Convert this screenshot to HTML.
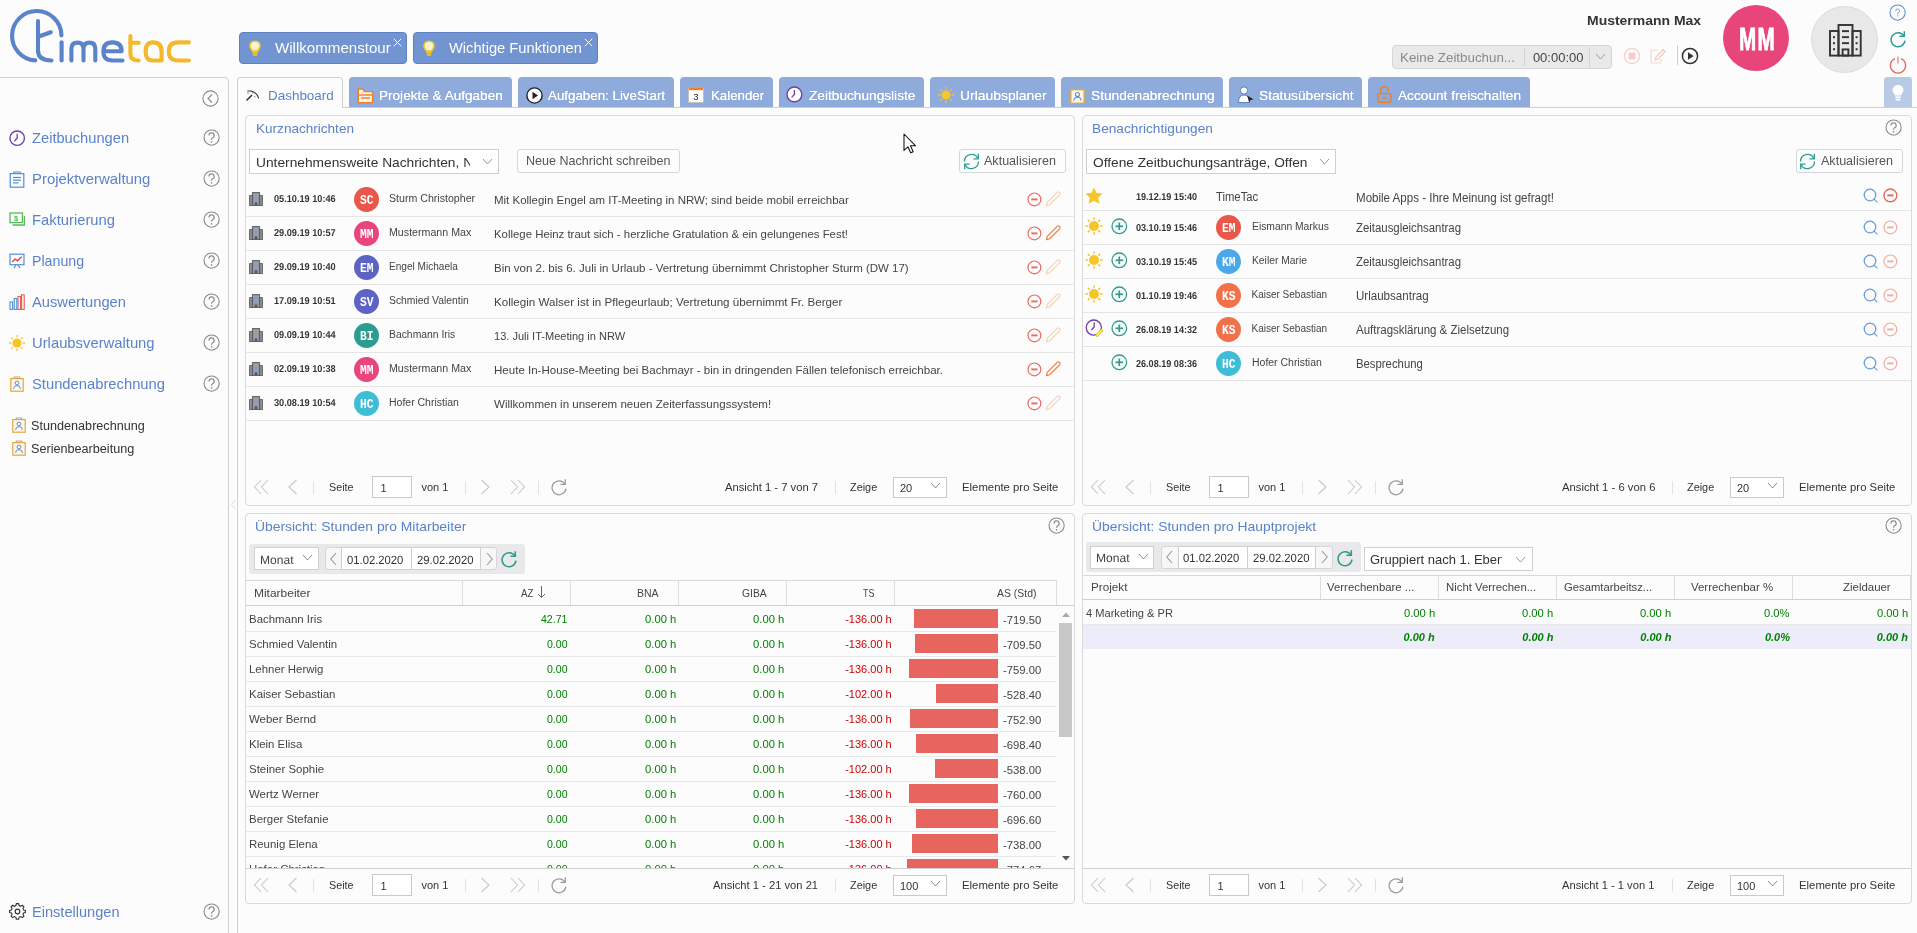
<!DOCTYPE html><html><head><meta charset="utf-8"><title>TimeTac Dashboard</title><style>
html,body{margin:0;padding:0;}
body{width:1917px;height:933px;overflow:hidden;position:relative;background:#fcfcfc;font-family:"Liberation Sans",sans-serif;}
.a{position:absolute;display:block;}
.t{position:absolute;white-space:nowrap;line-height:1;transform-origin:0 0;}
</style></head><body><div class="a" style="left:0;top:0;width:1917px;height:933px;overflow:hidden;will-change:transform;background:#fcfcfc">
<svg class="a" style="left:0;top:0" width="200" height="76" viewBox="0 0 200 76">
<g fill="none" stroke="#5a83ca" stroke-width="4.1" stroke-linecap="round" stroke-linejoin="round">
<path d="M35.2 60.4 A24.7 24.7 0 1 1 61.45 35.4"/>
<path d="M38 21 L38 50.5 Q38 60.5 51.5 60.5"/>
<path d="M38 36.8 L50.8 32.3"/>
<path d="M61.6 42.2 L61.6 60.4"/>
<path d="M71.4 60.4 L71.4 49 Q71.4 42.6 77.4 42.6 Q83.5 42.6 83.5 49 L83.5 60.4 M83.5 49 Q83.5 42.6 89.5 42.6 Q95.3 42.6 95.3 49 L95.3 60.4"/>
<path d="M122.5 60.5 L112.5 60.5 Q103.4 60.5 103.4 51.5 Q103.4 42.4 112.4 42.4 Q121.6 42.4 121.6 51.2 L104 51.2"/>
</g>
<g fill="none" stroke="#f4b82e" stroke-width="4.1" stroke-linecap="round" stroke-linejoin="round">
<path d="M130.4 36 L130.4 54 Q130.4 60.5 138.6 60.5"/>
<path d="M130.4 42.8 L138.8 42.8"/>
<path d="M161.6 60.4 L161.6 51.5 Q161.6 42.4 152.6 42.4 Q145.6 42.4 145.6 51.5 Q145.6 60.5 152.6 60.5 L161.6 60.5"/>
<path d="M188.8 42.4 L178.2 42.4 Q168.8 42.4 168.8 51.5 Q168.8 60.5 178.2 60.5 L188.8 60.5"/>
</g></svg>
<div class="a" style="left:239px;top:32px;width:168px;height:32px;background:#7295d1;border:1px solid #5d80c5;box-sizing:border-box;border-radius:4px;"></div>
<svg class="a" style="left:249px;top:40px;" width="12" height="17" viewBox="0 0 12 17"><path d="M6 1.2 C2.8 1.2 1 3.5 1 6 C1 8.2 2.6 9.2 3.4 11 L8.6 11 C9.4 9.2 11 8.2 11 6 C11 3.5 9.2 1.2 6 1.2 Z" fill="#fbf2d2" stroke="#f4c92a" stroke-width="1.6"/><rect x="3.4" y="11.8" width="5.2" height="1.8" fill="#f4c92a"/><rect x="3.8" y="14.1" width="4.4" height="1.6" fill="#f4c92a"/></svg>
<div class="t" style="left:275.00px;top:41.00px;font-size:14px;color:#fff;transform:scaleX(1.0782);">Willkommenstour</div>
<svg class="a" style="left:393px;top:37.5px;" width="9" height="9" viewBox="0 0 9 9"><path d="M0.8 0.8 L8.2 8.2 M8.2 0.8 L0.8 8.2" stroke="#fff" stroke-width="1"/></svg>
<div class="a" style="left:413px;top:32px;width:185px;height:32px;background:#7295d1;border:1px solid #5d80c5;box-sizing:border-box;border-radius:4px;"></div>
<svg class="a" style="left:423px;top:40px;" width="12" height="17" viewBox="0 0 12 17"><path d="M6 1.2 C2.8 1.2 1 3.5 1 6 C1 8.2 2.6 9.2 3.4 11 L8.6 11 C9.4 9.2 11 8.2 11 6 C11 3.5 9.2 1.2 6 1.2 Z" fill="#fbf2d2" stroke="#f4c92a" stroke-width="1.6"/><rect x="3.4" y="11.8" width="5.2" height="1.8" fill="#f4c92a"/><rect x="3.8" y="14.1" width="4.4" height="1.6" fill="#f4c92a"/></svg>
<div class="t" style="left:448.70px;top:41.00px;font-size:14px;color:#fff;transform:scaleX(1.0481);">Wichtige Funktionen</div>
<svg class="a" style="left:584px;top:37.5px;" width="9" height="9" viewBox="0 0 9 9"><path d="M0.8 0.8 L8.2 8.2 M8.2 0.8 L0.8 8.2" stroke="#fff" stroke-width="1"/></svg>
<div class="t" style="left:1586.60px;top:14.00px;font-size:13px;color:#333;font-weight:bold;transform:scaleX(1.0744);">Mustermann Max</div>
<div class="a" style="left:1392px;top:45px;width:220px;height:24px;background:#e9e9e9;border:1px solid #d6d6d6;box-sizing:border-box;border-radius:4px;"></div>
<div class="a" style="left:1523.5px;top:48px;width:1px;height:18px;background:#d4d4d4;"></div>
<div class="a" style="left:1589px;top:47px;width:1px;height:21px;background:#d4d4d4;"></div>
<div class="t" style="left:1399.50px;top:51.00px;font-size:13px;color:#8a8a8a;transform:scaleX(1.0264);">Keine Zeitbuchun...</div>
<div class="t" style="left:1532.90px;top:51.00px;font-size:13px;color:#444;">00:00:00</div>
<svg class="a" style="left:1595.3px;top:53.3px;" width="11" height="7" viewBox="0 0 11 7"><path d="M1 1 L5.5 6 L10 1" fill="none" stroke="#999" stroke-width="1"/></svg>
<svg class="a" style="left:1623px;top:47px;" width="18" height="18" viewBox="0 0 18 18"><circle cx="9" cy="9" r="7.6" fill="none" stroke="#f6cdc8" stroke-width="1.3"/><rect x="5.6" y="5.6" width="6.8" height="6.8" rx="1" fill="#f6cdc8"/></svg>
<svg class="a" style="left:1649px;top:47px;" width="18" height="18" viewBox="0 0 18 18"><path d="M2 3 L9 3 M2 3 L2 16 L12 16 L12 12" fill="none" stroke="#f3d9cf" stroke-width="1.2"/><path d="M6 13 L7 10 L14 2.5 L16 4.5 L9 12 Z" fill="none" stroke="#f5cdb8" stroke-width="1.3"/></svg>
<div class="a" style="left:1676.5px;top:45px;width:1px;height:20px;background:#cfcfcf;"></div>
<svg class="a" style="left:1681px;top:47px;" width="18" height="18" viewBox="0 0 18 18"><circle cx="9" cy="9" r="7.6" fill="none" stroke="#333" stroke-width="1.5"/><path d="M7 5.2 L12.6 9 L7 12.8 Z" fill="#333"/></svg>
<div class="a" style="left:1723px;top:5px;width:66px;height:66px;border-radius:50%;background:#e8457a;"></div>
<div class="t" style="left:1739.3px;top:24px;font-size:31.5px;color:#fff;font-weight:bold;transform:scaleX(0.655);letter-spacing:2px;-webkit-text-stroke:0.9px #fff">MM</div>
<div class="a" style="left:1811px;top:6px;width:67px;height:67px;border-radius:50%;background:#e8e8e8;border:1px solid #dcdcdc;box-sizing:border-box;"></div>
<svg class="a" style="left:1829px;top:23.5px;" width="33" height="33" viewBox="0 0 33 33"><g fill="none" stroke="#333" stroke-width="1.9"><rect x="9.5" y="1" width="14" height="30.6"/><rect x="1" y="7" width="8.5" height="24.6"/><rect x="23.5" y="7" width="8.2" height="24.6"/><rect x="13.6" y="25.4" width="5.8" height="6.2"/></g><g fill="#333"><rect x="13" y="6.2" width="7" height="1.9"/><rect x="13" y="12.2" width="7" height="1.9"/><rect x="13" y="18.2" width="7" height="1.9"/><rect x="4" y="12.2" width="2" height="2"/><rect x="4" y="18.2" width="2" height="2"/><rect x="4" y="24.2" width="2" height="2"/><rect x="26.6" y="12.2" width="2" height="2"/><rect x="26.6" y="18.2" width="2" height="2"/><rect x="26.6" y="24.2" width="2" height="2"/></g></svg>
<svg class="a" style="left:1888.4px;top:3.4000000000000004px;" width="19.2" height="19.2" viewBox="0 0 19.2 19.2"><circle cx="9.6" cy="9.6" r="7.6" fill="none" stroke="#5b8fd6" stroke-width="1.1"/><g transform="translate(9.6 9.6) scale(0.75)"><path d="M-2.6 -2.2 a2.6 2.6 0 1 1 3.6 2.4 c-0.8 0.4 -1 0.9 -1 1.9" fill="none" stroke="#5b8fd6" stroke-width="1.2000000000000002"/><circle cx="0" cy="4.3" r="0.8" fill="#5b8fd6"/></g></svg>
<svg class="a" style="left:1889.0px;top:29.6px;" width="18" height="18" viewBox="0 0 16 16"><path d="M13.2 5.2 A6.2 6.2 0 1 0 14.2 9.5" fill="none" stroke="#2a9d8f" stroke-width="1.3"/><path d="M13.6 1.2 L13.6 5.6 L9.3 5.6" fill="none" stroke="#2a9d8f" stroke-width="1.3"/></svg>
<svg class="a" style="left:1889px;top:56px;" width="18" height="18" viewBox="0 0 18 18"><path d="M5.9 2.6 A7.6 7.6 0 1 0 12.1 2.6" fill="none" stroke="#e8675a" stroke-width="1.3"/><line x1="9" y1="0.8" x2="9" y2="7.6" stroke="#ec8a80" stroke-width="1.4"/></svg>
<div class="a" style="left:-5px;top:77px;width:234px;height:900px;border:1px solid #cfcfcf;border-radius:4px;box-sizing:border-box;background:#fcfcfc"></div>
<svg class="a" style="left:201.5px;top:89.5px;" width="17" height="17" viewBox="0 0 17 17"><circle cx="8.5" cy="8.5" r="7.6" fill="none" stroke="#8a8a8a" stroke-width="1.1"/><path d="M10 4.5 L6 8.5 L10 12.5" fill="none" stroke="#8a8a8a" stroke-width="1.1"/></svg>
<div class="t" style="left:31.50px;top:130.00px;font-size:15px;color:#5b82c9;transform:scaleX(0.9783);">Zeitbuchungen</div>
<svg class="a" style="left:201.9px;top:128.4px;" width="19.2" height="19.2" viewBox="0 0 19.2 19.2"><circle cx="9.6" cy="9.6" r="7.6" fill="none" stroke="#8a8a8a" stroke-width="1.1"/><g transform="translate(9.6 9.6) scale(1.0)"><path d="M-2.6 -2.2 a2.6 2.6 0 1 1 3.6 2.4 c-0.8 0.4 -1 0.9 -1 1.9" fill="none" stroke="#8a8a8a" stroke-width="1.2000000000000002"/><circle cx="0" cy="4.3" r="0.8" fill="#8a8a8a"/></g></svg>
<div class="t" style="left:31.50px;top:171.00px;font-size:15px;color:#5b82c9;transform:scaleX(0.9930);">Projektverwaltung</div>
<svg class="a" style="left:201.9px;top:169.4px;" width="19.2" height="19.2" viewBox="0 0 19.2 19.2"><circle cx="9.6" cy="9.6" r="7.6" fill="none" stroke="#8a8a8a" stroke-width="1.1"/><g transform="translate(9.6 9.6) scale(1.0)"><path d="M-2.6 -2.2 a2.6 2.6 0 1 1 3.6 2.4 c-0.8 0.4 -1 0.9 -1 1.9" fill="none" stroke="#8a8a8a" stroke-width="1.2000000000000002"/><circle cx="0" cy="4.3" r="0.8" fill="#8a8a8a"/></g></svg>
<div class="t" style="left:31.50px;top:212.00px;font-size:15px;color:#5b82c9;transform:scaleX(0.9855);">Fakturierung</div>
<svg class="a" style="left:201.9px;top:210.4px;" width="19.2" height="19.2" viewBox="0 0 19.2 19.2"><circle cx="9.6" cy="9.6" r="7.6" fill="none" stroke="#8a8a8a" stroke-width="1.1"/><g transform="translate(9.6 9.6) scale(1.0)"><path d="M-2.6 -2.2 a2.6 2.6 0 1 1 3.6 2.4 c-0.8 0.4 -1 0.9 -1 1.9" fill="none" stroke="#8a8a8a" stroke-width="1.2000000000000002"/><circle cx="0" cy="4.3" r="0.8" fill="#8a8a8a"/></g></svg>
<div class="t" style="left:31.50px;top:253.00px;font-size:15px;color:#5b82c9;transform:scaleX(0.9465);">Planung</div>
<svg class="a" style="left:201.9px;top:251.4px;" width="19.2" height="19.2" viewBox="0 0 19.2 19.2"><circle cx="9.6" cy="9.6" r="7.6" fill="none" stroke="#8a8a8a" stroke-width="1.1"/><g transform="translate(9.6 9.6) scale(1.0)"><path d="M-2.6 -2.2 a2.6 2.6 0 1 1 3.6 2.4 c-0.8 0.4 -1 0.9 -1 1.9" fill="none" stroke="#8a8a8a" stroke-width="1.2000000000000002"/><circle cx="0" cy="4.3" r="0.8" fill="#8a8a8a"/></g></svg>
<div class="t" style="left:31.50px;top:294.00px;font-size:15px;color:#5b82c9;transform:scaleX(0.9791);">Auswertungen</div>
<svg class="a" style="left:201.9px;top:292.4px;" width="19.2" height="19.2" viewBox="0 0 19.2 19.2"><circle cx="9.6" cy="9.6" r="7.6" fill="none" stroke="#8a8a8a" stroke-width="1.1"/><g transform="translate(9.6 9.6) scale(1.0)"><path d="M-2.6 -2.2 a2.6 2.6 0 1 1 3.6 2.4 c-0.8 0.4 -1 0.9 -1 1.9" fill="none" stroke="#8a8a8a" stroke-width="1.2000000000000002"/><circle cx="0" cy="4.3" r="0.8" fill="#8a8a8a"/></g></svg>
<div class="t" style="left:31.50px;top:335.00px;font-size:15px;color:#5b82c9;transform:scaleX(0.9868);">Urlaubsverwaltung</div>
<svg class="a" style="left:201.9px;top:333.4px;" width="19.2" height="19.2" viewBox="0 0 19.2 19.2"><circle cx="9.6" cy="9.6" r="7.6" fill="none" stroke="#8a8a8a" stroke-width="1.1"/><g transform="translate(9.6 9.6) scale(1.0)"><path d="M-2.6 -2.2 a2.6 2.6 0 1 1 3.6 2.4 c-0.8 0.4 -1 0.9 -1 1.9" fill="none" stroke="#8a8a8a" stroke-width="1.2000000000000002"/><circle cx="0" cy="4.3" r="0.8" fill="#8a8a8a"/></g></svg>
<div class="t" style="left:31.50px;top:376.00px;font-size:15px;color:#5b82c9;transform:scaleX(0.9842);">Stundenabrechnung</div>
<svg class="a" style="left:201.9px;top:374.4px;" width="19.2" height="19.2" viewBox="0 0 19.2 19.2"><circle cx="9.6" cy="9.6" r="7.6" fill="none" stroke="#8a8a8a" stroke-width="1.1"/><g transform="translate(9.6 9.6) scale(1.0)"><path d="M-2.6 -2.2 a2.6 2.6 0 1 1 3.6 2.4 c-0.8 0.4 -1 0.9 -1 1.9" fill="none" stroke="#8a8a8a" stroke-width="1.2000000000000002"/><circle cx="0" cy="4.3" r="0.8" fill="#8a8a8a"/></g></svg>
<svg class="a" style="left:7.5px;top:128.8px;" width="18.4" height="18.4" viewBox="0 0 18.4 18.4"><circle cx="9.2" cy="9.2" r="7.2" fill="#fff" stroke="#6f3fa8" stroke-width="1.4"/><path d="M9.2 4.699999999999999 L9.2 9.2 L6.3999999999999995 12.2" fill="none" stroke="#6f3fa8" stroke-width="1.3"/></svg>
<svg class="a" style="left:9px;top:171px;" width="16" height="17" viewBox="0 0 16 17"><g fill="none" stroke="#4f8fd6" stroke-width="1.2"><rect x="1.2" y="2.6" width="13.6" height="13.6"/><path d="M5 2.6 L5 1 L11 1 L11 2.6"/><line x1="4" y1="6.5" x2="12" y2="6.5"/><line x1="4" y1="9.2" x2="12" y2="9.2"/><line x1="4" y1="11.9" x2="9.5" y2="11.9"/></g></svg>
<svg class="a" style="left:8.5px;top:212px;" width="17" height="16" viewBox="0 0 17 16"><g fill="none" stroke="#57b95a" stroke-width="1.3"><rect x="1" y="1" width="12.4" height="9.6"/><path d="M3.6 13 L15.4 13 L15.4 4"/></g><text x="7.2" y="8.6" font-size="7.5" font-family="Liberation Sans" fill="#57b95a" text-anchor="middle" font-weight="bold">$</text></svg>
<svg class="a" style="left:9px;top:253px;" width="16" height="16" viewBox="0 0 16 16"><g fill="none" stroke="#4f8fd6" stroke-width="1.2"><rect x="1" y="1.2" width="14" height="10.5"/><path d="M5 15 L7 11.7 M11 15 L9 11.7"/></g><path d="M3.2 9 L6 6 L8.5 7.8 L12.8 3.6" fill="none" stroke="#e53935" stroke-width="1.3"/></svg>
<svg class="a" style="left:9px;top:294px;" width="16" height="16" viewBox="0 0 16 16"><g fill="none" stroke-width="1.1"><rect x="1" y="8" width="2.6" height="7.4" stroke="#4f8fd6"/><rect x="5.2" y="4.5" width="2.6" height="10.9" stroke="#4f8fd6"/><rect x="9" y="2.5" width="2.6" height="12.9" stroke="#e35b5b"/><rect x="12.6" y="0.8" width="2.6" height="14.6" stroke="#e35b5b"/></g></svg>
<svg class="a" style="left:7.699999999999999px;top:334.0px;" width="18" height="18" viewBox="0 0 18 18"><circle cx="9.0" cy="9.0" r="4.6" fill="#f5c52a"/><line x1="15.20" y1="9.00" x2="16.60" y2="9.00" stroke="#f5c52a" stroke-width="1.3" stroke-linecap="round"/><line x1="13.38" y1="13.38" x2="14.37" y2="14.37" stroke="#f5c52a" stroke-width="1.3" stroke-linecap="round"/><line x1="9.00" y1="15.20" x2="9.00" y2="16.60" stroke="#f5c52a" stroke-width="1.3" stroke-linecap="round"/><line x1="4.62" y1="13.38" x2="3.63" y2="14.37" stroke="#f5c52a" stroke-width="1.3" stroke-linecap="round"/><line x1="2.80" y1="9.00" x2="1.40" y2="9.00" stroke="#f5c52a" stroke-width="1.3" stroke-linecap="round"/><line x1="4.62" y1="4.62" x2="3.63" y2="3.63" stroke="#f5c52a" stroke-width="1.3" stroke-linecap="round"/><line x1="9.00" y1="2.80" x2="9.00" y2="1.40" stroke="#f5c52a" stroke-width="1.3" stroke-linecap="round"/><line x1="13.38" y1="4.62" x2="14.37" y2="3.63" stroke="#f5c52a" stroke-width="1.3" stroke-linecap="round"/></svg>
<svg class="a" style="left:9.8px;top:376px;" width="14" height="16" viewBox="0 0 14 16"><rect x="0.8" y="2.6" width="12.4" height="12.6" fill="#fff8e8" stroke="#e2a93a" stroke-width="1.2"/><path d="M4.2 2.6 L4.2 1 L9.8 1 L9.8 2.6" fill="none" stroke="#aaa" stroke-width="1.1"/><circle cx="7" cy="7" r="1.9" fill="none" stroke="#5b8fd6" stroke-width="1"/><path d="M3.6 13 Q3.6 9.6 7 9.6 Q10.4 9.6 10.4 13" fill="none" stroke="#5b8fd6" stroke-width="1"/></svg>
<svg class="a" style="left:11.7px;top:417.4px;" width="14" height="16" viewBox="0 0 14 16"><rect x="0.8" y="2.6" width="12.4" height="12.6" fill="#fff8e8" stroke="#e2a93a" stroke-width="1.2"/><path d="M4.2 2.6 L4.2 1 L9.8 1 L9.8 2.6" fill="none" stroke="#aaa" stroke-width="1.1"/><circle cx="7" cy="7" r="1.9" fill="none" stroke="#5b8fd6" stroke-width="1"/><path d="M3.6 13 Q3.6 9.6 7 9.6 Q10.4 9.6 10.4 13" fill="none" stroke="#5b8fd6" stroke-width="1"/></svg>
<div class="t" style="left:31.20px;top:420.00px;font-size:12px;color:#333;transform:scaleX(1.0531);">Stundenabrechnung</div>
<svg class="a" style="left:11.7px;top:440.4px;" width="14" height="16" viewBox="0 0 14 16"><rect x="0.8" y="2.6" width="12.4" height="12.6" fill="#fff8e8" stroke="#e2a93a" stroke-width="1.2"/><path d="M4.2 2.6 L4.2 1 L9.8 1 L9.8 2.6" fill="none" stroke="#aaa" stroke-width="1.1"/><circle cx="7" cy="7" r="1.9" fill="none" stroke="#5b8fd6" stroke-width="1"/><path d="M3.6 13 Q3.6 9.6 7 9.6 Q10.4 9.6 10.4 13" fill="none" stroke="#5b8fd6" stroke-width="1"/></svg>
<div class="t" style="left:31.20px;top:443.00px;font-size:12px;color:#333;transform:scaleX(1.0524);">Serienbearbeitung</div>
<svg class="a" style="left:9px;top:903px;" width="17" height="17" viewBox="0 0 17 17"><g fill="none" stroke="#333" stroke-width="1.2"><circle cx="8.5" cy="8.5" r="2.3"/><path d="M7.3 1.2 L9.7 1.2 L10.2 3.2 L11.8 4 L13.6 3 L15.3 4.7 L14.3 6.5 L15 8 L16.9 8.5 L16.9 10.8 L15 11.2 L14.3 12.6 L15.3 14.4 L13.6 16 L11.8 15 L10.2 15.8 L9.7 17.8 L7.3 17.8 L6.8 15.8 L5.2 15 L3.4 16 L1.7 14.4 L2.7 12.6 L2 11.2 L0.1 10.8 L0.1 8.5 L2 8 L2.7 6.5 L1.7 4.7 L3.4 3 L5.2 4 L6.8 3.2 Z" transform="translate(0.5 -0.5) scale(0.94)"/></g></svg>
<div class="t" style="left:31.50px;top:904.00px;font-size:15px;color:#5b82c9;transform:scaleX(0.9715);">Einstellungen</div>
<svg class="a" style="left:201.9px;top:901.9px;" width="19.2" height="19.2" viewBox="0 0 19.2 19.2"><circle cx="9.6" cy="9.6" r="7.6" fill="none" stroke="#8a8a8a" stroke-width="1.1"/><g transform="translate(9.6 9.6) scale(1.0)"><path d="M-2.6 -2.2 a2.6 2.6 0 1 1 3.6 2.4 c-0.8 0.4 -1 0.9 -1 1.9" fill="none" stroke="#8a8a8a" stroke-width="1.2000000000000002"/><circle cx="0" cy="4.3" r="0.8" fill="#8a8a8a"/></g></svg>
<svg class="a" style="left:230px;top:499px;" width="7" height="11" viewBox="0 0 7 11"><path d="M5 1 L1.5 5.5 L5 10" fill="none" stroke="#dcdcdc" stroke-width="1"/></svg>
<div class="a" style="left:237px;top:107px;width:1700px;height:900px;border-top:1px solid #cfcfcf;border-left:1px solid #cfcfcf;background:#fcfcfc"></div>
<div class="a" style="left:237px;top:77px;width:106px;height:31px;border:1px solid #cfcfcf;border-bottom:none;border-radius:4px 4px 0 0;box-sizing:border-box;background:#fcfcfc"></div>
<svg class="a" style="left:244.5px;top:87px;" width="15" height="14" viewBox="0 0 15 14"><path d="M2 13 L6.5 8.5" stroke="#333" stroke-width="1.6" stroke-linecap="round"/><path d="M2.4 4.2 A9.5 9.5 0 0 1 13.6 11.4" fill="none" stroke="#333" stroke-width="1.1" stroke-dasharray="0.1 0"/><circle cx="3" cy="6" r="0.6" fill="#333"/><circle cx="7.8" cy="5.8" r="0.6" fill="#555"/><circle cx="9.8" cy="9.8" r="0.6" fill="#555"/></svg>
<div class="t" style="left:267.80px;top:89.00px;font-size:13px;color:#5b82c9;transform:scaleX(1.0342);">Dashboard</div>
<div class="a" style="left:349px;top:77px;width:163px;height:30px;background:#8eabdb;border-radius:4px 4px 0 0;"></div>
<div class="t" style="left:379.40px;top:89.00px;font-size:13px;color:#fff;transform:scaleX(1.0442);text-shadow:0 0 0.4px #fff;">Projekte &amp; Aufgaben</div>
<svg class="a" style="left:356.5px;top:86.5px;" width="17" height="17" viewBox="0 0 17 17"><g fill="none" stroke="#f07f24" stroke-width="1.4"><path d="M1.3 3 L1.3 15.6 L15.6 15.6 L15.6 4.6 L7.4 4.6 L6 2 L1.3 2 Z" fill="#fff3e6"/><line x1="1.3" y1="8" x2="15.6" y2="8"/><line x1="4" y1="11" x2="13" y2="11"/></g></svg>
<div class="a" style="left:518px;top:77px;width:156px;height:30px;background:#8eabdb;border-radius:4px 4px 0 0;"></div>
<div class="t" style="left:548.40px;top:89.00px;font-size:13px;color:#fff;transform:scaleX(1.0252);text-shadow:0 0 0.4px #fff;">Aufgaben: LiveStart</div>
<svg class="a" style="left:525.5px;top:86.5px;" width="17" height="17" viewBox="0 0 17 17"><circle cx="8.5" cy="8.5" r="7.6" fill="#fff" stroke="#222" stroke-width="1.4"/><path d="M6.5 4.8 L12 8.5 L6.5 12.2 Z" fill="#222"/></svg>
<div class="a" style="left:680px;top:77px;width:93px;height:30px;background:#8eabdb;border-radius:4px 4px 0 0;"></div>
<div class="t" style="left:710.70px;top:89.00px;font-size:13px;color:#fff;transform:scaleX(1.0218);text-shadow:0 0 0.4px #fff;">Kalender</div>
<svg class="a" style="left:688px;top:87px;" width="16" height="16" viewBox="0 0 16 16"><rect x="0.5" y="1.2" width="15" height="14.3" fill="#fff" stroke="#bbb" stroke-width="0.8"/><rect x="1" y="1" width="14" height="2.2" fill="#f57f17"/><text x="8" y="12.6" font-size="9.5" font-family="Liberation Sans" fill="#222" text-anchor="middle">3</text></svg>
<div class="a" style="left:779px;top:77px;width:145px;height:30px;background:#8eabdb;border-radius:4px 4px 0 0;"></div>
<div class="t" style="left:808.80px;top:89.00px;font-size:13px;color:#fff;transform:scaleX(1.0514);text-shadow:0 0 0.4px #fff;">Zeitbuchungsliste</div>
<svg class="a" style="left:785.2px;top:85.39999999999999px;" width="18.8" height="18.8" viewBox="0 0 18.8 18.8"><circle cx="9.4" cy="9.4" r="7.4" fill="#fff" stroke="#6f3fa8" stroke-width="1.4"/><path d="M9.4 4.9 L9.4 9.4 L6.6000000000000005 12.4" fill="none" stroke="#6f3fa8" stroke-width="1.3"/></svg>
<div class="a" style="left:930px;top:77px;width:125px;height:30px;background:#8eabdb;border-radius:4px 4px 0 0;"></div>
<div class="t" style="left:960.00px;top:89.00px;font-size:13px;color:#fff;transform:scaleX(1.0695);text-shadow:0 0 0.4px #fff;">Urlaubsplaner</div>
<svg class="a" style="left:937.0px;top:85.8px;" width="18" height="18" viewBox="0 0 18 18"><circle cx="9.0" cy="9.0" r="4.6" fill="#f5c52a"/><line x1="15.20" y1="9.00" x2="16.60" y2="9.00" stroke="#f5c52a" stroke-width="1.3" stroke-linecap="round"/><line x1="13.38" y1="13.38" x2="14.37" y2="14.37" stroke="#f5c52a" stroke-width="1.3" stroke-linecap="round"/><line x1="9.00" y1="15.20" x2="9.00" y2="16.60" stroke="#f5c52a" stroke-width="1.3" stroke-linecap="round"/><line x1="4.62" y1="13.38" x2="3.63" y2="14.37" stroke="#f5c52a" stroke-width="1.3" stroke-linecap="round"/><line x1="2.80" y1="9.00" x2="1.40" y2="9.00" stroke="#f5c52a" stroke-width="1.3" stroke-linecap="round"/><line x1="4.62" y1="4.62" x2="3.63" y2="3.63" stroke="#f5c52a" stroke-width="1.3" stroke-linecap="round"/><line x1="9.00" y1="2.80" x2="9.00" y2="1.40" stroke="#f5c52a" stroke-width="1.3" stroke-linecap="round"/><line x1="13.38" y1="4.62" x2="14.37" y2="3.63" stroke="#f5c52a" stroke-width="1.3" stroke-linecap="round"/></svg>
<div class="a" style="left:1061px;top:77px;width:162px;height:30px;background:#8eabdb;border-radius:4px 4px 0 0;"></div>
<div class="t" style="left:1091.00px;top:89.00px;font-size:13px;color:#fff;transform:scaleX(1.0567);text-shadow:0 0 0.4px #fff;">Stundenabrechnung</div>
<svg class="a" style="left:1069.8px;top:86.5px;" width="15" height="17" viewBox="0 0 14 16"><rect x="0.8" y="2.6" width="12.4" height="12.6" fill="#fff8e8" stroke="#e2a93a" stroke-width="1.2"/><path d="M4.2 2.6 L4.2 1 L9.8 1 L9.8 2.6" fill="none" stroke="#aaa" stroke-width="1.1"/><circle cx="7" cy="7" r="1.9" fill="none" stroke="#5b8fd6" stroke-width="1"/><path d="M3.6 13 Q3.6 9.6 7 9.6 Q10.4 9.6 10.4 13" fill="none" stroke="#5b8fd6" stroke-width="1"/></svg>
<div class="a" style="left:1229px;top:77px;width:133px;height:30px;background:#8eabdb;border-radius:4px 4px 0 0;"></div>
<div class="t" style="left:1258.70px;top:89.00px;font-size:13px;color:#fff;transform:scaleX(1.0555);text-shadow:0 0 0.4px #fff;">Statusübersicht</div>
<svg class="a" style="left:1238px;top:86px;" width="16" height="17" viewBox="0 0 16 17"><circle cx="6" cy="4.5" r="3.6" fill="#fff" stroke="#3d6fb5" stroke-width="0.8"/><path d="M0.5 16.5 Q0.5 9 6 9 Q11.5 9 11.5 16.5 Z" fill="#fff" stroke="#3d6fb5" stroke-width="0.8"/><path d="M9.2 9.6 L15.6 13.4 L12.4 13.9 L11.2 16.6 Z" fill="#222"/></svg>
<div class="a" style="left:1368px;top:77px;width:162px;height:30px;background:#8eabdb;border-radius:4px 4px 0 0;"></div>
<div class="t" style="left:1398.20px;top:89.00px;font-size:13px;color:#fff;transform:scaleX(1.0513);text-shadow:0 0 0.4px #fff;">Account freischalten</div>
<svg class="a" style="left:1376.5px;top:86px;" width="15" height="17" viewBox="0 0 15 17"><g fill="none" stroke="#f07f24" stroke-width="1.4"><rect x="1" y="7.6" width="13" height="8.6" rx="1.5"/><path d="M3.6 7.6 L3.6 4.6 A3.9 3.9 0 0 1 11.4 4.6 L11.4 5"/><line x1="5.5" y1="12" x2="9.5" y2="12"/></g></svg>
<div class="a" style="left:1884px;top:77px;width:28px;height:30px;background:#b9cae7;border-radius:3px 3px 0 0;"></div>
<svg class="a" style="left:1891px;top:84px;" width="14" height="18" viewBox="0 0 14 18"><path d="M7 1 C3.6 1 1.6 3.4 1.6 6.2 C1.6 8.6 3.4 9.8 4 11.5 L10 11.5 C10.6 9.8 12.4 8.6 12.4 6.2 C12.4 3.4 10.4 1 7 1 Z" fill="#fff"/><rect x="4.3" y="12.4" width="5.4" height="1.8" fill="#fff"/><rect x="4.8" y="14.8" width="4.4" height="1.7" fill="#fff"/></svg>
<div class="a" style="left:245px;top:115px;width:830px;height:391px;border:1px solid #dadada;border-radius:4px;box-sizing:border-box;background:#fcfcfc;"></div>
<div class="t" style="left:255.70px;top:122.00px;font-size:13px;color:#5b82c9;transform:scaleX(1.0429);">Kurznachrichten</div>
<div class="a" style="left:249px;top:149px;width:250px;height:25px;border:1px solid #cfcfcf;background:#fff;box-sizing:border-box;"></div>
<div class="a" style="left:250px;top:150px;width:220px;height:23px;overflow:hidden">
<div class="t" style="left:6.40px;top:6.00px;font-size:13px;color:#333;transform:scaleX(1.0579)">Unternehmensweite Nachrichten, Nachrichten</div></div>
<svg class="a" style="left:481.5px;top:158.0px;" width="11" height="7" viewBox="0 0 11 7"><path d="M1 1 L5.5 6 L10 1" fill="none" stroke="#999" stroke-width="1"/></svg>
<div class="a" style="left:517px;top:149px;width:163px;height:24px;border:1px solid #d6d6d6;background:#fdfdfd;box-sizing:border-box;border-radius:3px;"></div>
<div class="t" style="left:526.00px;top:154.00px;font-size:13px;color:#555;transform:scaleX(0.9657);">Neue Nachricht schreiben</div>
<div class="a" style="left:959px;top:149px;width:107px;height:24px;border:1px solid #d6d6d6;background:#fdfdfd;box-sizing:border-box;border-radius:3px;"></div>
<svg class="a" style="left:962.5px;top:152.5px;" width="17" height="17" viewBox="0 0 17 17"><path d="M1.5 8.5 A7 7 0 0 1 14.9 5.6" fill="none" stroke="#2a9d8f" stroke-width="1.3"/><path d="M15.3 0.8 L15.3 5.9 L10.5 5.9" fill="none" stroke="#2a9d8f" stroke-width="1.3"/><path d="M15.5 8.5 A7 7 0 0 1 2.1 11.4" fill="none" stroke="#2a9d8f" stroke-width="1.3"/><path d="M1.7 16.2 L1.7 11.1 L6.5 11.1" fill="none" stroke="#2a9d8f" stroke-width="1.3"/></svg>
<div class="t" style="left:984.20px;top:154.00px;font-size:13px;color:#555;transform:scaleX(0.9657);">Aktualisieren</div>
<div class="a" style="left:246px;top:216px;width:828px;height:1px;background:#e6e6e6;"></div>
<svg class="a" style="left:249px;top:192.0px;" width="14" height="14" viewBox="0 0 14 14"><rect x="0.6" y="3.6" width="2.8" height="10" fill="#8c8c8c" stroke="#555" stroke-width="0.8"/><rect x="10.6" y="3.6" width="2.8" height="10" fill="#8c8c8c" stroke="#555" stroke-width="0.8"/><rect x="3.4" y="0.6" width="7.2" height="13" fill="#9a9a9a" stroke="#555" stroke-width="0.9"/><rect x="4.8" y="2.6" width="4.4" height="1.3" fill="#7fa6d8"/><rect x="4.8" y="5.2" width="4.4" height="1.3" fill="#7fa6d8"/><rect x="4.8" y="7.8" width="4.4" height="1.3" fill="#7fa6d8"/><rect x="5.8" y="10.4" width="2.4" height="3" fill="#555"/></svg>
<div class="t" style="left:274.00px;top:195.00px;font-size:10px;color:#333;font-weight:bold;transform:scaleX(0.9168);text-rendering:geometricPrecision;">05.10.19 10:46</div>
<div class="a" style="left:354.0px;top:187.1px;width:24.8px;height:24.8px;border-radius:50%;background:#e8574a;"></div>
<div class="t" style="left:359.60px;top:195.00px;font-size:12.5px;font-family:'Liberation Mono',monospace;color:#fff;font-weight:bold;transform:scaleX(0.907)">SC</div>
<div class="t" style="left:389.20px;top:194.00px;font-size:10px;color:#444;transform:scaleX(1.0611);">Sturm Christopher</div>
<div class="t" style="left:494.10px;top:195.00px;font-size:11px;color:#444;transform:scaleX(1.0430);">Mit Kollegin Engel am IT-Meeting in NRW; sind beide mobil erreichbar</div>
<svg class="a" style="left:1025.8999999999999px;top:190.79999999999998px;" width="16.8" height="16.8" viewBox="0 0 16.8 16.8"><circle cx="8.4" cy="8.4" r="6.4" fill="none" stroke="#ea6a5e" stroke-width="1.2"/><line x1="5.300000000000001" y1="8.4" x2="11.5" y2="8.4" stroke="#ea6a5e" stroke-width="1.9"/></svg>
<svg class="a" style="left:1043px;top:189.2px;" width="20" height="20" viewBox="0 0 20 20"><g transform="rotate(-45 10 10)"><path d="M0.6 10 L3.6 8.3 L17.6 8.3 A1.7 1.7 0 0 1 17.6 11.7 L3.6 11.7 Z" fill="none" stroke="#fad2b6" stroke-width="1.2" stroke-linejoin="round"/></g></svg>
<div class="a" style="left:246px;top:250px;width:828px;height:1px;background:#e6e6e6;"></div>
<svg class="a" style="left:249px;top:226.0px;" width="14" height="14" viewBox="0 0 14 14"><rect x="0.6" y="3.6" width="2.8" height="10" fill="#8c8c8c" stroke="#555" stroke-width="0.8"/><rect x="10.6" y="3.6" width="2.8" height="10" fill="#8c8c8c" stroke="#555" stroke-width="0.8"/><rect x="3.4" y="0.6" width="7.2" height="13" fill="#9a9a9a" stroke="#555" stroke-width="0.9"/><rect x="4.8" y="2.6" width="4.4" height="1.3" fill="#7fa6d8"/><rect x="4.8" y="5.2" width="4.4" height="1.3" fill="#7fa6d8"/><rect x="4.8" y="7.8" width="4.4" height="1.3" fill="#7fa6d8"/><rect x="5.8" y="10.4" width="2.4" height="3" fill="#555"/></svg>
<div class="t" style="left:274.00px;top:229.00px;font-size:10px;color:#333;font-weight:bold;transform:scaleX(0.9168);text-rendering:geometricPrecision;">29.09.19 10:57</div>
<div class="a" style="left:354.0px;top:221.1px;width:24.8px;height:24.8px;border-radius:50%;background:#e8457a;"></div>
<div class="t" style="left:359.60px;top:229.00px;font-size:12.5px;font-family:'Liberation Mono',monospace;color:#fff;font-weight:bold;transform:scaleX(0.907)">MM</div>
<div class="t" style="left:389.20px;top:228.00px;font-size:10px;color:#444;transform:scaleX(1.0654);">Mustermann Max</div>
<div class="t" style="left:494.10px;top:229.00px;font-size:11px;color:#444;transform:scaleX(1.0356);">Kollege Heinz traut sich - herzliche Gratulation &amp; ein gelungenes Fest!</div>
<svg class="a" style="left:1025.8999999999999px;top:224.79999999999998px;" width="16.8" height="16.8" viewBox="0 0 16.8 16.8"><circle cx="8.4" cy="8.4" r="6.4" fill="none" stroke="#ea6a5e" stroke-width="1.2"/><line x1="5.300000000000001" y1="8.4" x2="11.5" y2="8.4" stroke="#ea6a5e" stroke-width="1.9"/></svg>
<svg class="a" style="left:1043px;top:223.2px;" width="20" height="20" viewBox="0 0 20 20"><g transform="rotate(-45 10 10)"><path d="M0.6 10 L3.6 8.3 L17.6 8.3 A1.7 1.7 0 0 1 17.6 11.7 L3.6 11.7 Z" fill="none" stroke="#ef7d3b" stroke-width="1.2" stroke-linejoin="round"/></g></svg>
<div class="a" style="left:246px;top:284px;width:828px;height:1px;background:#e6e6e6;"></div>
<svg class="a" style="left:249px;top:260.0px;" width="14" height="14" viewBox="0 0 14 14"><rect x="0.6" y="3.6" width="2.8" height="10" fill="#8c8c8c" stroke="#555" stroke-width="0.8"/><rect x="10.6" y="3.6" width="2.8" height="10" fill="#8c8c8c" stroke="#555" stroke-width="0.8"/><rect x="3.4" y="0.6" width="7.2" height="13" fill="#9a9a9a" stroke="#555" stroke-width="0.9"/><rect x="4.8" y="2.6" width="4.4" height="1.3" fill="#7fa6d8"/><rect x="4.8" y="5.2" width="4.4" height="1.3" fill="#7fa6d8"/><rect x="4.8" y="7.8" width="4.4" height="1.3" fill="#7fa6d8"/><rect x="5.8" y="10.4" width="2.4" height="3" fill="#555"/></svg>
<div class="t" style="left:274.00px;top:263.00px;font-size:10px;color:#333;font-weight:bold;transform:scaleX(0.9168);text-rendering:geometricPrecision;">29.09.19 10:40</div>
<div class="a" style="left:354.0px;top:255.1px;width:24.8px;height:24.8px;border-radius:50%;background:#5c63c2;"></div>
<div class="t" style="left:359.60px;top:263.00px;font-size:12.5px;font-family:'Liberation Mono',monospace;color:#fff;font-weight:bold;transform:scaleX(0.907)">EM</div>
<div class="t" style="left:389.20px;top:262.00px;font-size:10px;color:#444;transform:scaleX(1.0077);">Engel Michaela</div>
<div class="t" style="left:494.10px;top:263.00px;font-size:11px;color:#444;transform:scaleX(1.0452);">Bin von 2. bis 6. Juli in Urlaub - Vertretung übernimmt Christopher Sturm (DW 17)</div>
<svg class="a" style="left:1025.8999999999999px;top:258.8px;" width="16.8" height="16.8" viewBox="0 0 16.8 16.8"><circle cx="8.4" cy="8.4" r="6.4" fill="none" stroke="#ea6a5e" stroke-width="1.2"/><line x1="5.300000000000001" y1="8.4" x2="11.5" y2="8.4" stroke="#ea6a5e" stroke-width="1.9"/></svg>
<svg class="a" style="left:1043px;top:257.2px;" width="20" height="20" viewBox="0 0 20 20"><g transform="rotate(-45 10 10)"><path d="M0.6 10 L3.6 8.3 L17.6 8.3 A1.7 1.7 0 0 1 17.6 11.7 L3.6 11.7 Z" fill="none" stroke="#fad2b6" stroke-width="1.2" stroke-linejoin="round"/></g></svg>
<div class="a" style="left:246px;top:318px;width:828px;height:1px;background:#e6e6e6;"></div>
<svg class="a" style="left:249px;top:294.0px;" width="14" height="14" viewBox="0 0 14 14"><rect x="0.6" y="3.6" width="2.8" height="10" fill="#8c8c8c" stroke="#555" stroke-width="0.8"/><rect x="10.6" y="3.6" width="2.8" height="10" fill="#8c8c8c" stroke="#555" stroke-width="0.8"/><rect x="3.4" y="0.6" width="7.2" height="13" fill="#9a9a9a" stroke="#555" stroke-width="0.9"/><rect x="4.8" y="2.6" width="4.4" height="1.3" fill="#7fa6d8"/><rect x="4.8" y="5.2" width="4.4" height="1.3" fill="#7fa6d8"/><rect x="4.8" y="7.8" width="4.4" height="1.3" fill="#7fa6d8"/><rect x="5.8" y="10.4" width="2.4" height="3" fill="#555"/></svg>
<div class="t" style="left:274.00px;top:297.00px;font-size:10px;color:#333;font-weight:bold;transform:scaleX(0.9168);text-rendering:geometricPrecision;">17.09.19 10:51</div>
<div class="a" style="left:354.0px;top:289.1px;width:24.8px;height:24.8px;border-radius:50%;background:#5c63c2;"></div>
<div class="t" style="left:359.60px;top:297.00px;font-size:12.5px;font-family:'Liberation Mono',monospace;color:#fff;font-weight:bold;transform:scaleX(0.907)">SV</div>
<div class="t" style="left:389.20px;top:296.00px;font-size:10px;color:#444;transform:scaleX(1.0338);">Schmied Valentin</div>
<div class="t" style="left:494.10px;top:297.00px;font-size:11px;color:#444;transform:scaleX(1.0544);">Kollegin Walser ist in Pflegeurlaub; Vertretung übernimmt Fr. Berger</div>
<svg class="a" style="left:1025.8999999999999px;top:292.8px;" width="16.8" height="16.8" viewBox="0 0 16.8 16.8"><circle cx="8.4" cy="8.4" r="6.4" fill="none" stroke="#ea6a5e" stroke-width="1.2"/><line x1="5.300000000000001" y1="8.4" x2="11.5" y2="8.4" stroke="#ea6a5e" stroke-width="1.9"/></svg>
<svg class="a" style="left:1043px;top:291.2px;" width="20" height="20" viewBox="0 0 20 20"><g transform="rotate(-45 10 10)"><path d="M0.6 10 L3.6 8.3 L17.6 8.3 A1.7 1.7 0 0 1 17.6 11.7 L3.6 11.7 Z" fill="none" stroke="#fad2b6" stroke-width="1.2" stroke-linejoin="round"/></g></svg>
<div class="a" style="left:246px;top:352px;width:828px;height:1px;background:#e6e6e6;"></div>
<svg class="a" style="left:249px;top:328.0px;" width="14" height="14" viewBox="0 0 14 14"><rect x="0.6" y="3.6" width="2.8" height="10" fill="#8c8c8c" stroke="#555" stroke-width="0.8"/><rect x="10.6" y="3.6" width="2.8" height="10" fill="#8c8c8c" stroke="#555" stroke-width="0.8"/><rect x="3.4" y="0.6" width="7.2" height="13" fill="#9a9a9a" stroke="#555" stroke-width="0.9"/><rect x="4.8" y="2.6" width="4.4" height="1.3" fill="#7fa6d8"/><rect x="4.8" y="5.2" width="4.4" height="1.3" fill="#7fa6d8"/><rect x="4.8" y="7.8" width="4.4" height="1.3" fill="#7fa6d8"/><rect x="5.8" y="10.4" width="2.4" height="3" fill="#555"/></svg>
<div class="t" style="left:274.00px;top:331.00px;font-size:10px;color:#333;font-weight:bold;transform:scaleX(0.9168);text-rendering:geometricPrecision;">09.09.19 10:44</div>
<div class="a" style="left:354.0px;top:323.1px;width:24.8px;height:24.8px;border-radius:50%;background:#2a9d8f;"></div>
<div class="t" style="left:359.60px;top:331.00px;font-size:12.5px;font-family:'Liberation Mono',monospace;color:#fff;font-weight:bold;transform:scaleX(0.907)">BI</div>
<div class="t" style="left:389.20px;top:330.00px;font-size:10px;color:#444;transform:scaleX(1.0372);">Bachmann Iris</div>
<div class="t" style="left:494.10px;top:331.00px;font-size:11px;color:#444;transform:scaleX(1.0042);">13. Juli IT-Meeting in NRW</div>
<svg class="a" style="left:1025.8999999999999px;top:326.8px;" width="16.8" height="16.8" viewBox="0 0 16.8 16.8"><circle cx="8.4" cy="8.4" r="6.4" fill="none" stroke="#ea6a5e" stroke-width="1.2"/><line x1="5.300000000000001" y1="8.4" x2="11.5" y2="8.4" stroke="#ea6a5e" stroke-width="1.9"/></svg>
<svg class="a" style="left:1043px;top:325.2px;" width="20" height="20" viewBox="0 0 20 20"><g transform="rotate(-45 10 10)"><path d="M0.6 10 L3.6 8.3 L17.6 8.3 A1.7 1.7 0 0 1 17.6 11.7 L3.6 11.7 Z" fill="none" stroke="#fad2b6" stroke-width="1.2" stroke-linejoin="round"/></g></svg>
<div class="a" style="left:246px;top:386px;width:828px;height:1px;background:#e6e6e6;"></div>
<svg class="a" style="left:249px;top:362.0px;" width="14" height="14" viewBox="0 0 14 14"><rect x="0.6" y="3.6" width="2.8" height="10" fill="#8c8c8c" stroke="#555" stroke-width="0.8"/><rect x="10.6" y="3.6" width="2.8" height="10" fill="#8c8c8c" stroke="#555" stroke-width="0.8"/><rect x="3.4" y="0.6" width="7.2" height="13" fill="#9a9a9a" stroke="#555" stroke-width="0.9"/><rect x="4.8" y="2.6" width="4.4" height="1.3" fill="#7fa6d8"/><rect x="4.8" y="5.2" width="4.4" height="1.3" fill="#7fa6d8"/><rect x="4.8" y="7.8" width="4.4" height="1.3" fill="#7fa6d8"/><rect x="5.8" y="10.4" width="2.4" height="3" fill="#555"/></svg>
<div class="t" style="left:274.00px;top:365.00px;font-size:10px;color:#333;font-weight:bold;transform:scaleX(0.9168);text-rendering:geometricPrecision;">02.09.19 10:38</div>
<div class="a" style="left:354.0px;top:357.1px;width:24.8px;height:24.8px;border-radius:50%;background:#e8457a;"></div>
<div class="t" style="left:359.60px;top:365.00px;font-size:12.5px;font-family:'Liberation Mono',monospace;color:#fff;font-weight:bold;transform:scaleX(0.907)">MM</div>
<div class="t" style="left:389.20px;top:364.00px;font-size:10px;color:#444;transform:scaleX(1.0654);">Mustermann Max</div>
<div class="t" style="left:494.10px;top:365.00px;font-size:11px;color:#444;transform:scaleX(1.0491);">Heute In-House-Meeting bei Bachmayr - bin in dringenden Fällen telefonisch erreichbar.</div>
<svg class="a" style="left:1025.8999999999999px;top:360.8px;" width="16.8" height="16.8" viewBox="0 0 16.8 16.8"><circle cx="8.4" cy="8.4" r="6.4" fill="none" stroke="#ea6a5e" stroke-width="1.2"/><line x1="5.300000000000001" y1="8.4" x2="11.5" y2="8.4" stroke="#ea6a5e" stroke-width="1.9"/></svg>
<svg class="a" style="left:1043px;top:359.2px;" width="20" height="20" viewBox="0 0 20 20"><g transform="rotate(-45 10 10)"><path d="M0.6 10 L3.6 8.3 L17.6 8.3 A1.7 1.7 0 0 1 17.6 11.7 L3.6 11.7 Z" fill="none" stroke="#ef7d3b" stroke-width="1.2" stroke-linejoin="round"/></g></svg>
<div class="a" style="left:246px;top:420px;width:828px;height:1px;background:#e6e6e6;"></div>
<svg class="a" style="left:249px;top:396.0px;" width="14" height="14" viewBox="0 0 14 14"><rect x="0.6" y="3.6" width="2.8" height="10" fill="#8c8c8c" stroke="#555" stroke-width="0.8"/><rect x="10.6" y="3.6" width="2.8" height="10" fill="#8c8c8c" stroke="#555" stroke-width="0.8"/><rect x="3.4" y="0.6" width="7.2" height="13" fill="#9a9a9a" stroke="#555" stroke-width="0.9"/><rect x="4.8" y="2.6" width="4.4" height="1.3" fill="#7fa6d8"/><rect x="4.8" y="5.2" width="4.4" height="1.3" fill="#7fa6d8"/><rect x="4.8" y="7.8" width="4.4" height="1.3" fill="#7fa6d8"/><rect x="5.8" y="10.4" width="2.4" height="3" fill="#555"/></svg>
<div class="t" style="left:274.00px;top:399.00px;font-size:10px;color:#333;font-weight:bold;transform:scaleX(0.9168);text-rendering:geometricPrecision;">30.08.19 10:54</div>
<div class="a" style="left:354.0px;top:391.1px;width:24.8px;height:24.8px;border-radius:50%;background:#3fbcd6;"></div>
<div class="t" style="left:359.60px;top:399.00px;font-size:12.5px;font-family:'Liberation Mono',monospace;color:#fff;font-weight:bold;transform:scaleX(0.907)">HC</div>
<div class="t" style="left:389.20px;top:398.00px;font-size:10px;color:#444;transform:scaleX(1.0482);">Hofer Christian</div>
<div class="t" style="left:494.10px;top:399.00px;font-size:11px;color:#444;transform:scaleX(1.0495);">Willkommen in unserem neuen Zeiterfassungssystem!</div>
<svg class="a" style="left:1025.8999999999999px;top:394.8px;" width="16.8" height="16.8" viewBox="0 0 16.8 16.8"><circle cx="8.4" cy="8.4" r="6.4" fill="none" stroke="#ea6a5e" stroke-width="1.2"/><line x1="5.300000000000001" y1="8.4" x2="11.5" y2="8.4" stroke="#ea6a5e" stroke-width="1.9"/></svg>
<svg class="a" style="left:1043px;top:393.2px;" width="20" height="20" viewBox="0 0 20 20"><g transform="rotate(-45 10 10)"><path d="M0.6 10 L3.6 8.3 L17.6 8.3 A1.7 1.7 0 0 1 17.6 11.7 L3.6 11.7 Z" fill="none" stroke="#fad2b6" stroke-width="1.2" stroke-linejoin="round"/></g></svg>
<svg class="a" style="left:253px;top:479px;" width="17" height="16" viewBox="0 0 17 16"><path d="M8 1 L1.5 8 L8 15 M15 1 L8.5 8 L15 15" fill="none" stroke="#c8c8c8" stroke-width="1.1"/></svg>
<svg class="a" style="left:287px;top:479px;" width="11" height="16" viewBox="0 0 11 16"><path d="M9.5 1 L2 8 L9.5 15" fill="none" stroke="#c8c8c8" stroke-width="1.1"/></svg>
<div class="a" style="left:312.5px;top:480.5px;width:1px;height:13px;background:#e2e2e2;"></div>
<div class="t" style="left:328.70px;top:482.00px;font-size:11px;color:#333;transform:scaleX(0.9763);">Seite</div>
<div class="a" style="left:371.5px;top:476px;width:40px;height:22px;border:1px solid #c9c9c9;background:#fff;box-sizing:border-box;"></div>
<div class="t" style="left:380.50px;top:483.00px;font-size:11px;color:#333;">1</div>
<div class="t" style="left:421.50px;top:482.00px;font-size:11px;color:#333;">von 1</div>
<div class="a" style="left:464.5px;top:480.5px;width:1px;height:13px;background:#e2e2e2;"></div>
<svg class="a" style="left:479.5px;top:479px;" width="11" height="16" viewBox="0 0 11 16"><path d="M1.5 1 L9 8 L1.5 15" fill="none" stroke="#c8c8c8" stroke-width="1.1"/></svg>
<svg class="a" style="left:509px;top:479px;" width="17" height="16" viewBox="0 0 17 16"><path d="M2 1 L8.5 8 L2 15 M9 1 L15.5 8 L9 15" fill="none" stroke="#c8c8c8" stroke-width="1.1"/></svg>
<div class="a" style="left:537.5px;top:480.5px;width:1px;height:13px;background:#e2e2e2;"></div>
<svg class="a" style="left:549.5px;top:478.0px;" width="18" height="18" viewBox="0 0 16 16"><path d="M13.2 5.2 A6.2 6.2 0 1 0 14.2 9.5" fill="none" stroke="#9a9a9a" stroke-width="1.1"/><path d="M13.6 1.2 L13.6 5.6 L9.3 5.6" fill="none" stroke="#9a9a9a" stroke-width="1.1"/></svg>
<div class="t" style="left:725.00px;top:482.00px;font-size:11px;color:#333;transform:scaleX(1.0221);">Ansicht 1 - 7 von 7</div>
<div class="a" style="left:834.5px;top:480.5px;width:1px;height:13px;background:#e2e2e2;"></div>
<div class="t" style="left:850.00px;top:482.00px;font-size:11px;color:#333;transform:scaleX(0.9880);">Zeige</div>
<div class="a" style="left:893.0px;top:476.5px;width:54px;height:21px;border:1px solid #c9c9c9;background:#fff;box-sizing:border-box;"></div>
<div class="t" style="left:900.00px;top:483.00px;font-size:11px;color:#333;">20</div>
<svg class="a" style="left:929.5px;top:482.0px;" width="11" height="7" viewBox="0 0 11 7"><path d="M1 1 L5.5 6 L10 1" fill="none" stroke="#888" stroke-width="1"/></svg>
<div class="t" style="left:962.00px;top:482.00px;font-size:11px;color:#333;transform:scaleX(1.0307);">Elemente pro Seite</div>
<div class="a" style="left:1082px;top:115px;width:830px;height:391px;border:1px solid #dadada;border-radius:4px;box-sizing:border-box;background:#fcfcfc;"></div>
<div class="t" style="left:1092.30px;top:122.00px;font-size:13px;color:#5b82c9;transform:scaleX(1.0525);">Benachrichtigungen</div>
<svg class="a" style="left:1883.9px;top:118.4px;" width="19.2" height="19.2" viewBox="0 0 19.2 19.2"><circle cx="9.6" cy="9.6" r="7.6" fill="none" stroke="#8a8a8a" stroke-width="1.1"/><g transform="translate(9.6 9.6) scale(1.0)"><path d="M-2.6 -2.2 a2.6 2.6 0 1 1 3.6 2.4 c-0.8 0.4 -1 0.9 -1 1.9" fill="none" stroke="#8a8a8a" stroke-width="1.2000000000000002"/><circle cx="0" cy="4.3" r="0.8" fill="#8a8a8a"/></g></svg>
<div class="a" style="left:1086px;top:149px;width:249.5px;height:25px;border:1px solid #cfcfcf;background:#fff;box-sizing:border-box;"></div>
<div class="a" style="left:1087px;top:150px;width:220.5px;height:23px;overflow:hidden">
<div class="t" style="left:6.30px;top:6.00px;font-size:13px;color:#333;transform:scaleX(1.0547)">Offene Zeitbuchungsanträge, Offene</div></div>
<svg class="a" style="left:1318.5px;top:158.0px;" width="11" height="7" viewBox="0 0 11 7"><path d="M1 1 L5.5 6 L10 1" fill="none" stroke="#999" stroke-width="1"/></svg>
<div class="a" style="left:1796px;top:149px;width:107px;height:24px;border:1px solid #d6d6d6;background:#fdfdfd;box-sizing:border-box;border-radius:3px;"></div>
<svg class="a" style="left:1799.1px;top:152.5px;" width="17" height="17" viewBox="0 0 17 17"><path d="M1.5 8.5 A7 7 0 0 1 14.9 5.6" fill="none" stroke="#2a9d8f" stroke-width="1.3"/><path d="M15.3 0.8 L15.3 5.9 L10.5 5.9" fill="none" stroke="#2a9d8f" stroke-width="1.3"/><path d="M15.5 8.5 A7 7 0 0 1 2.1 11.4" fill="none" stroke="#2a9d8f" stroke-width="1.3"/><path d="M1.7 16.2 L1.7 11.1 L6.5 11.1" fill="none" stroke="#2a9d8f" stroke-width="1.3"/></svg>
<div class="t" style="left:1821.20px;top:154.00px;font-size:13px;color:#555;transform:scaleX(0.9657);">Aktualisieren</div>
<div class="a" style="left:1083px;top:210px;width:828px;height:1px;background:#e6e6e6;"></div>
<svg class="a" style="left:1085.3px;top:186.6px;" width="18" height="18" viewBox="0 0 18 18"><path d="M9 0.5 L11.6 6 L17.6 6.6 L13.1 10.7 L14.4 16.8 L9 13.7 L3.6 16.8 L4.9 10.7 L0.4 6.6 L6.4 6 Z" fill="#f5c52a"/></svg>
<div class="t" style="left:1136.10px;top:193.00px;font-size:10px;color:#333;font-weight:bold;transform:scaleX(0.9079);text-rendering:geometricPrecision;">19.12.19 15:40</div>
<div class="t" style="left:1216.30px;top:191.00px;font-size:12px;color:#444;transform:scaleX(0.9397);">TimeTac</div>
<div class="t" style="left:1356.40px;top:192.00px;font-size:12px;color:#444;transform:scaleX(0.9630);">Mobile Apps - Ihre Meinung ist gefragt!</div>
<svg class="a" style="left:1881.5px;top:187.4px;" width="16.8" height="16.8" viewBox="0 0 16.8 16.8"><circle cx="8.4" cy="8.4" r="6.4" fill="none" stroke="#ea6454" stroke-width="1.4"/><line x1="5.300000000000001" y1="8.4" x2="11.5" y2="8.4" stroke="#ea6454" stroke-width="1.9"/></svg>
<svg class="a" style="left:1862.8px;top:187.8px;" width="16" height="16" viewBox="0 0 16 16"><circle cx="7" cy="7" r="5.8" fill="none" stroke="#6a9bda" stroke-width="1.25"/><line x1="11.2" y1="11.2" x2="14.4" y2="14.4" stroke="#6a9bda" stroke-width="1.2"/></svg>
<div class="a" style="left:1083px;top:244px;width:828px;height:1px;background:#e6e6e6;"></div>
<svg class="a" style="left:1085.0px;top:216.7px;" width="18" height="18" viewBox="0 0 18 18"><circle cx="9.0" cy="9.0" r="5" fill="#f5c52a"/><line x1="15.70" y1="9.00" x2="17.00" y2="9.00" stroke="#f5c52a" stroke-width="1.6" stroke-linecap="round"/><line x1="13.74" y1="13.74" x2="14.66" y2="14.66" stroke="#f5c52a" stroke-width="1.6" stroke-linecap="round"/><line x1="9.00" y1="15.70" x2="9.00" y2="17.00" stroke="#f5c52a" stroke-width="1.6" stroke-linecap="round"/><line x1="4.26" y1="13.74" x2="3.34" y2="14.66" stroke="#f5c52a" stroke-width="1.6" stroke-linecap="round"/><line x1="2.30" y1="9.00" x2="1.00" y2="9.00" stroke="#f5c52a" stroke-width="1.6" stroke-linecap="round"/><line x1="4.26" y1="4.26" x2="3.34" y2="3.34" stroke="#f5c52a" stroke-width="1.6" stroke-linecap="round"/><line x1="9.00" y1="2.30" x2="9.00" y2="1.00" stroke="#f5c52a" stroke-width="1.6" stroke-linecap="round"/><line x1="13.74" y1="4.26" x2="14.66" y2="3.34" stroke="#f5c52a" stroke-width="1.6" stroke-linecap="round"/></svg>
<svg class="a" style="left:1109.6000000000001px;top:216.89999999999998px;" width="18.6" height="18.6" viewBox="0 0 18.6 18.6"><circle cx="9.3" cy="9.3" r="7.3" fill="none" stroke="#2a9d8f" stroke-width="1.3"/><line x1="5.500000000000001" y1="9.3" x2="13.100000000000001" y2="9.3" stroke="#2a9d8f" stroke-width="1.7"/><line x1="9.3" y1="5.500000000000001" x2="9.3" y2="13.100000000000001" stroke="#2a9d8f" stroke-width="1.7"/></svg>
<div class="t" style="left:1136.10px;top:224.00px;font-size:10px;color:#333;font-weight:bold;transform:scaleX(0.9079);text-rendering:geometricPrecision;">03.10.19 15:46</div>
<div class="a" style="left:1216.1999999999998px;top:214.79999999999998px;width:24.8px;height:24.8px;border-radius:50%;background:#e8574a;"></div>
<div class="t" style="left:1221.80px;top:223.00px;font-size:12.5px;font-family:'Liberation Mono',monospace;color:#fff;font-weight:bold;transform:scaleX(0.907)">EM</div>
<div class="t" style="left:1251.50px;top:222.00px;font-size:10px;color:#444;transform:scaleX(1.0313);">Eismann Markus</div>
<div class="t" style="left:1356.40px;top:222.00px;font-size:12px;color:#444;transform:scaleX(0.9483);">Zeitausgleichsantrag</div>
<svg class="a" style="left:1881.5px;top:219.29999999999998px;" width="16.8" height="16.8" viewBox="0 0 16.8 16.8"><circle cx="8.4" cy="8.4" r="6.4" fill="none" stroke="#f3aaa2" stroke-width="1.2"/><line x1="5.300000000000001" y1="8.4" x2="11.5" y2="8.4" stroke="#f3aaa2" stroke-width="1.9"/></svg>
<svg class="a" style="left:1862.8px;top:219.7px;" width="16" height="16" viewBox="0 0 16 16"><circle cx="7" cy="7" r="5.8" fill="none" stroke="#6a9bda" stroke-width="1.25"/><line x1="11.2" y1="11.2" x2="14.4" y2="14.4" stroke="#6a9bda" stroke-width="1.2"/></svg>
<div class="a" style="left:1083px;top:278px;width:828px;height:1px;background:#e6e6e6;"></div>
<svg class="a" style="left:1085.0px;top:250.7px;" width="18" height="18" viewBox="0 0 18 18"><circle cx="9.0" cy="9.0" r="5" fill="#f5c52a"/><line x1="15.70" y1="9.00" x2="17.00" y2="9.00" stroke="#f5c52a" stroke-width="1.6" stroke-linecap="round"/><line x1="13.74" y1="13.74" x2="14.66" y2="14.66" stroke="#f5c52a" stroke-width="1.6" stroke-linecap="round"/><line x1="9.00" y1="15.70" x2="9.00" y2="17.00" stroke="#f5c52a" stroke-width="1.6" stroke-linecap="round"/><line x1="4.26" y1="13.74" x2="3.34" y2="14.66" stroke="#f5c52a" stroke-width="1.6" stroke-linecap="round"/><line x1="2.30" y1="9.00" x2="1.00" y2="9.00" stroke="#f5c52a" stroke-width="1.6" stroke-linecap="round"/><line x1="4.26" y1="4.26" x2="3.34" y2="3.34" stroke="#f5c52a" stroke-width="1.6" stroke-linecap="round"/><line x1="9.00" y1="2.30" x2="9.00" y2="1.00" stroke="#f5c52a" stroke-width="1.6" stroke-linecap="round"/><line x1="13.74" y1="4.26" x2="14.66" y2="3.34" stroke="#f5c52a" stroke-width="1.6" stroke-linecap="round"/></svg>
<svg class="a" style="left:1109.6000000000001px;top:250.89999999999998px;" width="18.6" height="18.6" viewBox="0 0 18.6 18.6"><circle cx="9.3" cy="9.3" r="7.3" fill="none" stroke="#2a9d8f" stroke-width="1.3"/><line x1="5.500000000000001" y1="9.3" x2="13.100000000000001" y2="9.3" stroke="#2a9d8f" stroke-width="1.7"/><line x1="9.3" y1="5.500000000000001" x2="9.3" y2="13.100000000000001" stroke="#2a9d8f" stroke-width="1.7"/></svg>
<div class="t" style="left:1136.10px;top:258.00px;font-size:10px;color:#333;font-weight:bold;transform:scaleX(0.9079);text-rendering:geometricPrecision;">03.10.19 15:45</div>
<div class="a" style="left:1216.1999999999998px;top:248.79999999999998px;width:24.8px;height:24.8px;border-radius:50%;background:#4aa8e8;"></div>
<div class="t" style="left:1221.80px;top:257.00px;font-size:12.5px;font-family:'Liberation Mono',monospace;color:#fff;font-weight:bold;transform:scaleX(0.907)">KM</div>
<div class="t" style="left:1251.50px;top:256.00px;font-size:10px;color:#444;transform:scaleX(1.0292);">Keiler Marie</div>
<div class="t" style="left:1356.40px;top:256.00px;font-size:12px;color:#444;transform:scaleX(0.9483);">Zeitausgleichsantrag</div>
<svg class="a" style="left:1881.5px;top:253.29999999999998px;" width="16.8" height="16.8" viewBox="0 0 16.8 16.8"><circle cx="8.4" cy="8.4" r="6.4" fill="none" stroke="#f3aaa2" stroke-width="1.2"/><line x1="5.300000000000001" y1="8.4" x2="11.5" y2="8.4" stroke="#f3aaa2" stroke-width="1.9"/></svg>
<svg class="a" style="left:1862.8px;top:253.7px;" width="16" height="16" viewBox="0 0 16 16"><circle cx="7" cy="7" r="5.8" fill="none" stroke="#6a9bda" stroke-width="1.25"/><line x1="11.2" y1="11.2" x2="14.4" y2="14.4" stroke="#6a9bda" stroke-width="1.2"/></svg>
<div class="a" style="left:1083px;top:312px;width:828px;height:1px;background:#e6e6e6;"></div>
<svg class="a" style="left:1085.0px;top:284.7px;" width="18" height="18" viewBox="0 0 18 18"><circle cx="9.0" cy="9.0" r="5" fill="#f5c52a"/><line x1="15.70" y1="9.00" x2="17.00" y2="9.00" stroke="#f5c52a" stroke-width="1.6" stroke-linecap="round"/><line x1="13.74" y1="13.74" x2="14.66" y2="14.66" stroke="#f5c52a" stroke-width="1.6" stroke-linecap="round"/><line x1="9.00" y1="15.70" x2="9.00" y2="17.00" stroke="#f5c52a" stroke-width="1.6" stroke-linecap="round"/><line x1="4.26" y1="13.74" x2="3.34" y2="14.66" stroke="#f5c52a" stroke-width="1.6" stroke-linecap="round"/><line x1="2.30" y1="9.00" x2="1.00" y2="9.00" stroke="#f5c52a" stroke-width="1.6" stroke-linecap="round"/><line x1="4.26" y1="4.26" x2="3.34" y2="3.34" stroke="#f5c52a" stroke-width="1.6" stroke-linecap="round"/><line x1="9.00" y1="2.30" x2="9.00" y2="1.00" stroke="#f5c52a" stroke-width="1.6" stroke-linecap="round"/><line x1="13.74" y1="4.26" x2="14.66" y2="3.34" stroke="#f5c52a" stroke-width="1.6" stroke-linecap="round"/></svg>
<svg class="a" style="left:1109.6000000000001px;top:284.9px;" width="18.6" height="18.6" viewBox="0 0 18.6 18.6"><circle cx="9.3" cy="9.3" r="7.3" fill="none" stroke="#2a9d8f" stroke-width="1.3"/><line x1="5.500000000000001" y1="9.3" x2="13.100000000000001" y2="9.3" stroke="#2a9d8f" stroke-width="1.7"/><line x1="9.3" y1="5.500000000000001" x2="9.3" y2="13.100000000000001" stroke="#2a9d8f" stroke-width="1.7"/></svg>
<div class="t" style="left:1136.10px;top:292.00px;font-size:10px;color:#333;font-weight:bold;transform:scaleX(0.9079);text-rendering:geometricPrecision;">01.10.19 19:46</div>
<div class="a" style="left:1216.1999999999998px;top:282.8px;width:24.8px;height:24.8px;border-radius:50%;background:#f0714a;"></div>
<div class="t" style="left:1221.80px;top:291.00px;font-size:12.5px;font-family:'Liberation Mono',monospace;color:#fff;font-weight:bold;transform:scaleX(0.907)">KS</div>
<div class="t" style="left:1251.50px;top:290.00px;font-size:10px;color:#444;">Kaiser Sebastian</div>
<div class="t" style="left:1356.40px;top:290.00px;font-size:12px;color:#444;transform:scaleX(0.9632);">Urlaubsantrag</div>
<svg class="a" style="left:1881.5px;top:287.3px;" width="16.8" height="16.8" viewBox="0 0 16.8 16.8"><circle cx="8.4" cy="8.4" r="6.4" fill="none" stroke="#f3aaa2" stroke-width="1.2"/><line x1="5.300000000000001" y1="8.4" x2="11.5" y2="8.4" stroke="#f3aaa2" stroke-width="1.9"/></svg>
<svg class="a" style="left:1862.8px;top:287.7px;" width="16" height="16" viewBox="0 0 16 16"><circle cx="7" cy="7" r="5.8" fill="none" stroke="#6a9bda" stroke-width="1.25"/><line x1="11.2" y1="11.2" x2="14.4" y2="14.4" stroke="#6a9bda" stroke-width="1.2"/></svg>
<div class="a" style="left:1083px;top:346px;width:828px;height:1px;background:#e6e6e6;"></div>
<svg class="a" style="left:1085px;top:319.0px;" width="18" height="18" viewBox="0 0 18 18"><circle cx="8.8" cy="8.6" r="7.6" fill="none" stroke="#6f3fa8" stroke-width="1.3"/><path d="M9.2 3.6 L9.2 8 L6.4 11" fill="none" stroke="#6f3fa8" stroke-width="1.3"/><path d="M11 15.8 L16 10.8 A1.1 1.1 0 0 1 17.4 12.2 L12.4 17.2 A1.1 1.1 0 0 1 11 15.8 Z" fill="#fff" stroke="#f0c21e" stroke-width="1.2"/></svg>
<svg class="a" style="left:1109.6000000000001px;top:318.9px;" width="18.6" height="18.6" viewBox="0 0 18.6 18.6"><circle cx="9.3" cy="9.3" r="7.3" fill="none" stroke="#2a9d8f" stroke-width="1.3"/><line x1="5.500000000000001" y1="9.3" x2="13.100000000000001" y2="9.3" stroke="#2a9d8f" stroke-width="1.7"/><line x1="9.3" y1="5.500000000000001" x2="9.3" y2="13.100000000000001" stroke="#2a9d8f" stroke-width="1.7"/></svg>
<div class="t" style="left:1136.10px;top:326.00px;font-size:10px;color:#333;font-weight:bold;transform:scaleX(0.9079);text-rendering:geometricPrecision;">26.08.19 14:32</div>
<div class="a" style="left:1216.1999999999998px;top:316.8px;width:24.8px;height:24.8px;border-radius:50%;background:#f0714a;"></div>
<div class="t" style="left:1221.80px;top:325.00px;font-size:12.5px;font-family:'Liberation Mono',monospace;color:#fff;font-weight:bold;transform:scaleX(0.907)">KS</div>
<div class="t" style="left:1251.50px;top:324.00px;font-size:10px;color:#444;">Kaiser Sebastian</div>
<div class="t" style="left:1356.40px;top:324.00px;font-size:12px;color:#444;transform:scaleX(0.9566);">Auftragsklärung &amp; Zielsetzung</div>
<svg class="a" style="left:1881.5px;top:321.3px;" width="16.8" height="16.8" viewBox="0 0 16.8 16.8"><circle cx="8.4" cy="8.4" r="6.4" fill="none" stroke="#f3aaa2" stroke-width="1.2"/><line x1="5.300000000000001" y1="8.4" x2="11.5" y2="8.4" stroke="#f3aaa2" stroke-width="1.9"/></svg>
<svg class="a" style="left:1862.8px;top:321.7px;" width="16" height="16" viewBox="0 0 16 16"><circle cx="7" cy="7" r="5.8" fill="none" stroke="#6a9bda" stroke-width="1.25"/><line x1="11.2" y1="11.2" x2="14.4" y2="14.4" stroke="#6a9bda" stroke-width="1.2"/></svg>
<div class="a" style="left:1083px;top:380px;width:828px;height:1px;background:#e6e6e6;"></div>
<svg class="a" style="left:1109.6000000000001px;top:352.9px;" width="18.6" height="18.6" viewBox="0 0 18.6 18.6"><circle cx="9.3" cy="9.3" r="7.3" fill="none" stroke="#2a9d8f" stroke-width="1.3"/><line x1="5.500000000000001" y1="9.3" x2="13.100000000000001" y2="9.3" stroke="#2a9d8f" stroke-width="1.7"/><line x1="9.3" y1="5.500000000000001" x2="9.3" y2="13.100000000000001" stroke="#2a9d8f" stroke-width="1.7"/></svg>
<div class="t" style="left:1136.10px;top:360.00px;font-size:10px;color:#333;font-weight:bold;transform:scaleX(0.9079);text-rendering:geometricPrecision;">26.08.19 08:36</div>
<div class="a" style="left:1216.1999999999998px;top:350.8px;width:24.8px;height:24.8px;border-radius:50%;background:#3fbcd6;"></div>
<div class="t" style="left:1221.80px;top:359.00px;font-size:12.5px;font-family:'Liberation Mono',monospace;color:#fff;font-weight:bold;transform:scaleX(0.907)">HC</div>
<div class="t" style="left:1251.50px;top:358.00px;font-size:10px;color:#444;transform:scaleX(1.0467);">Hofer Christian</div>
<div class="t" style="left:1356.40px;top:358.00px;font-size:12px;color:#444;transform:scaleX(0.9448);">Besprechung</div>
<svg class="a" style="left:1881.5px;top:355.3px;" width="16.8" height="16.8" viewBox="0 0 16.8 16.8"><circle cx="8.4" cy="8.4" r="6.4" fill="none" stroke="#f3aaa2" stroke-width="1.2"/><line x1="5.300000000000001" y1="8.4" x2="11.5" y2="8.4" stroke="#f3aaa2" stroke-width="1.9"/></svg>
<svg class="a" style="left:1862.8px;top:355.7px;" width="16" height="16" viewBox="0 0 16 16"><circle cx="7" cy="7" r="5.8" fill="none" stroke="#6a9bda" stroke-width="1.25"/><line x1="11.2" y1="11.2" x2="14.4" y2="14.4" stroke="#6a9bda" stroke-width="1.2"/></svg>
<svg class="a" style="left:1090px;top:479px;" width="17" height="16" viewBox="0 0 17 16"><path d="M8 1 L1.5 8 L8 15 M15 1 L8.5 8 L15 15" fill="none" stroke="#c8c8c8" stroke-width="1.1"/></svg>
<svg class="a" style="left:1124px;top:479px;" width="11" height="16" viewBox="0 0 11 16"><path d="M9.5 1 L2 8 L9.5 15" fill="none" stroke="#c8c8c8" stroke-width="1.1"/></svg>
<div class="a" style="left:1149.5px;top:480.5px;width:1px;height:13px;background:#e2e2e2;"></div>
<div class="t" style="left:1165.70px;top:482.00px;font-size:11px;color:#333;transform:scaleX(0.9763);">Seite</div>
<div class="a" style="left:1208.5px;top:476px;width:40px;height:22px;border:1px solid #c9c9c9;background:#fff;box-sizing:border-box;"></div>
<div class="t" style="left:1217.50px;top:483.00px;font-size:11px;color:#333;">1</div>
<div class="t" style="left:1258.50px;top:482.00px;font-size:11px;color:#333;">von 1</div>
<div class="a" style="left:1301.5px;top:480.5px;width:1px;height:13px;background:#e2e2e2;"></div>
<svg class="a" style="left:1316.5px;top:479px;" width="11" height="16" viewBox="0 0 11 16"><path d="M1.5 1 L9 8 L1.5 15" fill="none" stroke="#c8c8c8" stroke-width="1.1"/></svg>
<svg class="a" style="left:1346px;top:479px;" width="17" height="16" viewBox="0 0 17 16"><path d="M2 1 L8.5 8 L2 15 M9 1 L15.5 8 L9 15" fill="none" stroke="#c8c8c8" stroke-width="1.1"/></svg>
<div class="a" style="left:1374.5px;top:480.5px;width:1px;height:13px;background:#e2e2e2;"></div>
<svg class="a" style="left:1386.5px;top:478.0px;" width="18" height="18" viewBox="0 0 16 16"><path d="M13.2 5.2 A6.2 6.2 0 1 0 14.2 9.5" fill="none" stroke="#9a9a9a" stroke-width="1.1"/><path d="M13.6 1.2 L13.6 5.6 L9.3 5.6" fill="none" stroke="#9a9a9a" stroke-width="1.1"/></svg>
<div class="t" style="left:1562.00px;top:482.00px;font-size:11px;color:#333;transform:scaleX(1.0254);">Ansicht 1 - 6 von 6</div>
<div class="a" style="left:1671.5px;top:480.5px;width:1px;height:13px;background:#e2e2e2;"></div>
<div class="t" style="left:1687.00px;top:482.00px;font-size:11px;color:#333;transform:scaleX(0.9880);">Zeige</div>
<div class="a" style="left:1730.0px;top:476.5px;width:54px;height:21px;border:1px solid #c9c9c9;background:#fff;box-sizing:border-box;"></div>
<div class="t" style="left:1737.00px;top:483.00px;font-size:11px;color:#333;">20</div>
<svg class="a" style="left:1766.5px;top:482.0px;" width="11" height="7" viewBox="0 0 11 7"><path d="M1 1 L5.5 6 L10 1" fill="none" stroke="#888" stroke-width="1"/></svg>
<div class="t" style="left:1799.00px;top:482.00px;font-size:11px;color:#333;transform:scaleX(1.0307);">Elemente pro Seite</div>
<div class="a" style="left:245px;top:513px;width:830px;height:391px;border:1px solid #dadada;border-radius:4px;box-sizing:border-box;background:#fcfcfc;"></div>
<div class="t" style="left:254.90px;top:520.00px;font-size:13px;color:#5b82c9;transform:scaleX(1.0675);">Übersicht: Stunden pro Mitarbeiter</div>
<svg class="a" style="left:1047.4px;top:516.4px;" width="19.2" height="19.2" viewBox="0 0 19.2 19.2"><circle cx="9.6" cy="9.6" r="7.6" fill="none" stroke="#8a8a8a" stroke-width="1.1"/><g transform="translate(9.6 9.6) scale(1.0)"><path d="M-2.6 -2.2 a2.6 2.6 0 1 1 3.6 2.4 c-0.8 0.4 -1 0.9 -1 1.9" fill="none" stroke="#8a8a8a" stroke-width="1.2000000000000002"/><circle cx="0" cy="4.3" r="0.8" fill="#8a8a8a"/></g></svg>
<div class="a" style="left:249px;top:544px;width:276px;height:29.5px;background:#e9e9e9;border-radius:3px;"></div>
<div class="a" style="left:254px;top:547.2px;width:64.5px;height:23.299999999999955px;border:1px solid #cfcfcf;background:#fff;box-sizing:border-box;"></div>
<div class="t" style="left:260.00px;top:554.00px;font-size:12px;color:#444;transform:scaleX(1.0047);text-rendering:geometricPrecision;">Monat</div>
<svg class="a" style="left:301.5px;top:554.35px;" width="11" height="7" viewBox="0 0 11 7"><path d="M1 1 L5.5 6 L10 1" fill="none" stroke="#888" stroke-width="1"/></svg>
<div class="a" style="left:325px;top:547.2px;width:172px;height:23.299999999999955px;border:1px solid #d6d6d6;background:#f7f7f7;box-sizing:border-box;border-radius:3px;"></div>
<div class="a" style="left:341.2px;top:547.2px;width:139.40000000000003px;height:23.299999999999955px;border:1px solid #cfcfcf;background:#fff;box-sizing:border-box;"></div>
<div class="a" style="left:410.5px;top:547.2px;width:1px;height:23.299999999999955px;background:#cfcfcf;"></div>
<svg class="a" style="left:329px;top:551.85px;" width="9" height="14" viewBox="0 0 9 14"><path d="M7 1 L1.8 7 L7 13" fill="none" stroke="#999" stroke-width="1.1"/></svg>
<svg class="a" style="left:484.6px;top:551.85px;" width="9" height="14" viewBox="0 0 9 14"><path d="M2 1 L7.2 7 L2 13" fill="none" stroke="#999" stroke-width="1.1"/></svg>
<div class="t" style="left:346.90px;top:554.00px;font-size:12px;color:#333;transform:scaleX(0.9378);text-rendering:geometricPrecision;">01.02.2020</div>
<div class="t" style="left:417.00px;top:554.00px;font-size:12px;color:#333;transform:scaleX(0.9395);text-rendering:geometricPrecision;">29.02.2020</div>
<svg class="a" style="left:500.0px;top:550.0px;" width="18" height="18" viewBox="0 0 16 16"><path d="M13.2 5.2 A6.2 6.2 0 1 0 14.2 9.5" fill="none" stroke="#2a9d8f" stroke-width="1.4"/><path d="M13.6 1.2 L13.6 5.6 L9.3 5.6" fill="none" stroke="#2a9d8f" stroke-width="1.4"/></svg>
<div class="a" style="left:246px;top:580px;width:811px;height:1px;background:#d8d8d8;"></div>
<div class="a" style="left:246px;top:605px;width:828px;height:1px;background:#d0d0d0;"></div>
<div class="a" style="left:462px;top:581px;width:1px;height:24px;background:#dedede;"></div>
<div class="a" style="left:570px;top:581px;width:1px;height:24px;background:#dedede;"></div>
<div class="a" style="left:678px;top:581px;width:1px;height:24px;background:#dedede;"></div>
<div class="a" style="left:786px;top:581px;width:1px;height:24px;background:#dedede;"></div>
<div class="a" style="left:894px;top:581px;width:1px;height:24px;background:#dedede;"></div>
<div class="a" style="left:1056px;top:581px;width:1px;height:24px;background:#dedede;"></div>
<div class="t" style="left:253.60px;top:588.00px;font-size:11px;color:#444;transform:scaleX(1.0872);">Mitarbeiter</div>
<div class="t" style="left:521.10px;top:588.00px;font-size:11px;color:#444;transform:scaleX(0.8889);">AZ</div>
<svg class="a" style="left:537px;top:585px;" width="9" height="14" viewBox="0 0 9 14"><path d="M4.5 1 L4.5 12.5 M1 9 L4.5 12.5 L8 9" fill="none" stroke="#666" stroke-width="1"/></svg>
<div class="t" style="left:637.00px;top:588.00px;font-size:11px;color:#444;transform:scaleX(0.9503);">BNA</div>
<div class="t" style="left:742.20px;top:588.00px;font-size:11px;color:#444;transform:scaleX(0.9425);">GIBA</div>
<div class="t" style="left:863.30px;top:588.00px;font-size:11px;color:#444;transform:scaleX(0.8107);">TS</div>
<div class="t" style="left:997.40px;top:588.00px;font-size:11px;color:#444;transform:scaleX(0.9497);">AS (Std)</div>
<div class="a" style="left:246px;top:606px;width:810px;height:262px;overflow:hidden">
<div class="a" style="left:0px;top:25px;width:810px;height:1px;background:#e8e8e8;"></div><div class="t" style="left:3.20px;top:8.00px;font-size:11px;color:#444;transform:scaleX(1.0400);">Bachmann Iris</div><div class="t" style="left:295.14px;top:8.00px;font-size:11px;color:#008000;transform:scaleX(0.9600);">42.71</div><div class="t" style="left:398.50px;top:8.00px;font-size:11px;color:#008000;transform:scaleX(1.0220);">0.00 h</div><div class="t" style="left:506.50px;top:8.00px;font-size:11px;color:#008000;transform:scaleX(1.0220);">0.00 h</div><div class="t" style="left:599.20px;top:8.00px;font-size:11px;color:#cc0000;">-136.00 h</div><div class="a" style="left:668px;top:3px;width:84px;height:19px;background:#e8655f;"></div><div class="t" style="left:756.90px;top:9.00px;font-size:11px;color:#444;transform:scaleX(1.0256);">-719.50</div><div class="a" style="left:0px;top:50px;width:810px;height:1px;background:#e8e8e8;"></div><div class="t" style="left:3.20px;top:33.00px;font-size:11px;color:#444;transform:scaleX(1.0400);">Schmied Valentin</div><div class="t" style="left:301.02px;top:33.00px;font-size:11px;color:#008000;transform:scaleX(0.9600);">0.00</div><div class="t" style="left:398.50px;top:33.00px;font-size:11px;color:#008000;transform:scaleX(1.0220);">0.00 h</div><div class="t" style="left:506.50px;top:33.00px;font-size:11px;color:#008000;transform:scaleX(1.0220);">0.00 h</div><div class="t" style="left:599.20px;top:33.00px;font-size:11px;color:#cc0000;">-136.00 h</div><div class="a" style="left:669px;top:28px;width:83px;height:19px;background:#e8655f;"></div><div class="t" style="left:756.90px;top:34.00px;font-size:11px;color:#444;transform:scaleX(1.0256);">-709.50</div><div class="a" style="left:0px;top:75px;width:810px;height:1px;background:#e8e8e8;"></div><div class="t" style="left:3.20px;top:58.00px;font-size:11px;color:#444;transform:scaleX(1.0400);">Lehner Herwig</div><div class="t" style="left:301.02px;top:58.00px;font-size:11px;color:#008000;transform:scaleX(0.9600);">0.00</div><div class="t" style="left:398.50px;top:58.00px;font-size:11px;color:#008000;transform:scaleX(1.0220);">0.00 h</div><div class="t" style="left:506.50px;top:58.00px;font-size:11px;color:#008000;transform:scaleX(1.0220);">0.00 h</div><div class="t" style="left:599.20px;top:58.00px;font-size:11px;color:#cc0000;">-136.00 h</div><div class="a" style="left:663px;top:53px;width:89px;height:19px;background:#e8655f;"></div><div class="t" style="left:756.90px;top:59.00px;font-size:11px;color:#444;transform:scaleX(1.0256);">-759.00</div><div class="a" style="left:0px;top:100px;width:810px;height:1px;background:#e8e8e8;"></div><div class="t" style="left:3.20px;top:83.00px;font-size:11px;color:#444;transform:scaleX(1.0400);">Kaiser Sebastian</div><div class="t" style="left:301.02px;top:83.00px;font-size:11px;color:#008000;transform:scaleX(0.9600);">0.00</div><div class="t" style="left:398.50px;top:83.00px;font-size:11px;color:#008000;transform:scaleX(1.0220);">0.00 h</div><div class="t" style="left:506.50px;top:83.00px;font-size:11px;color:#008000;transform:scaleX(1.0220);">0.00 h</div><div class="t" style="left:599.20px;top:83.00px;font-size:11px;color:#cc0000;">-102.00 h</div><div class="a" style="left:690px;top:78px;width:62px;height:19px;background:#e8655f;"></div><div class="t" style="left:756.90px;top:84.00px;font-size:11px;color:#444;transform:scaleX(1.0256);">-528.40</div><div class="a" style="left:0px;top:125px;width:810px;height:1px;background:#e8e8e8;"></div><div class="t" style="left:3.20px;top:108.00px;font-size:11px;color:#444;transform:scaleX(1.0400);">Weber Bernd</div><div class="t" style="left:301.02px;top:108.00px;font-size:11px;color:#008000;transform:scaleX(0.9600);">0.00</div><div class="t" style="left:398.50px;top:108.00px;font-size:11px;color:#008000;transform:scaleX(1.0220);">0.00 h</div><div class="t" style="left:506.50px;top:108.00px;font-size:11px;color:#008000;transform:scaleX(1.0220);">0.00 h</div><div class="t" style="left:599.20px;top:108.00px;font-size:11px;color:#cc0000;">-136.00 h</div><div class="a" style="left:664px;top:103px;width:88px;height:19px;background:#e8655f;"></div><div class="t" style="left:756.90px;top:109.00px;font-size:11px;color:#444;transform:scaleX(1.0256);">-752.90</div><div class="a" style="left:0px;top:150px;width:810px;height:1px;background:#e8e8e8;"></div><div class="t" style="left:3.20px;top:133.00px;font-size:11px;color:#444;transform:scaleX(1.0400);">Klein Elisa</div><div class="t" style="left:301.02px;top:133.00px;font-size:11px;color:#008000;transform:scaleX(0.9600);">0.00</div><div class="t" style="left:398.50px;top:133.00px;font-size:11px;color:#008000;transform:scaleX(1.0220);">0.00 h</div><div class="t" style="left:506.50px;top:133.00px;font-size:11px;color:#008000;transform:scaleX(1.0220);">0.00 h</div><div class="t" style="left:599.20px;top:133.00px;font-size:11px;color:#cc0000;">-136.00 h</div><div class="a" style="left:670px;top:128px;width:82px;height:19px;background:#e8655f;"></div><div class="t" style="left:756.90px;top:134.00px;font-size:11px;color:#444;transform:scaleX(1.0256);">-698.40</div><div class="a" style="left:0px;top:175px;width:810px;height:1px;background:#e8e8e8;"></div><div class="t" style="left:3.20px;top:158.00px;font-size:11px;color:#444;transform:scaleX(1.0400);">Steiner Sophie</div><div class="t" style="left:301.02px;top:158.00px;font-size:11px;color:#008000;transform:scaleX(0.9600);">0.00</div><div class="t" style="left:398.50px;top:158.00px;font-size:11px;color:#008000;transform:scaleX(1.0220);">0.00 h</div><div class="t" style="left:506.50px;top:158.00px;font-size:11px;color:#008000;transform:scaleX(1.0220);">0.00 h</div><div class="t" style="left:599.20px;top:158.00px;font-size:11px;color:#cc0000;">-102.00 h</div><div class="a" style="left:689px;top:153px;width:63px;height:19px;background:#e8655f;"></div><div class="t" style="left:756.90px;top:159.00px;font-size:11px;color:#444;transform:scaleX(1.0256);">-538.00</div><div class="a" style="left:0px;top:200px;width:810px;height:1px;background:#e8e8e8;"></div><div class="t" style="left:3.20px;top:183.00px;font-size:11px;color:#444;transform:scaleX(1.0400);">Wertz Werner</div><div class="t" style="left:301.02px;top:183.00px;font-size:11px;color:#008000;transform:scaleX(0.9600);">0.00</div><div class="t" style="left:398.50px;top:183.00px;font-size:11px;color:#008000;transform:scaleX(1.0220);">0.00 h</div><div class="t" style="left:506.50px;top:183.00px;font-size:11px;color:#008000;transform:scaleX(1.0220);">0.00 h</div><div class="t" style="left:599.20px;top:183.00px;font-size:11px;color:#cc0000;">-136.00 h</div><div class="a" style="left:663px;top:178px;width:89px;height:19px;background:#e8655f;"></div><div class="t" style="left:756.90px;top:184.00px;font-size:11px;color:#444;transform:scaleX(1.0256);">-760.00</div><div class="a" style="left:0px;top:225px;width:810px;height:1px;background:#e8e8e8;"></div><div class="t" style="left:3.20px;top:208.00px;font-size:11px;color:#444;transform:scaleX(1.0400);">Berger Stefanie</div><div class="t" style="left:301.02px;top:208.00px;font-size:11px;color:#008000;transform:scaleX(0.9600);">0.00</div><div class="t" style="left:398.50px;top:208.00px;font-size:11px;color:#008000;transform:scaleX(1.0220);">0.00 h</div><div class="t" style="left:506.50px;top:208.00px;font-size:11px;color:#008000;transform:scaleX(1.0220);">0.00 h</div><div class="t" style="left:599.20px;top:208.00px;font-size:11px;color:#cc0000;">-136.00 h</div><div class="a" style="left:670px;top:203px;width:82px;height:19px;background:#e8655f;"></div><div class="t" style="left:756.90px;top:209.00px;font-size:11px;color:#444;transform:scaleX(1.0256);">-696.60</div><div class="a" style="left:0px;top:250px;width:810px;height:1px;background:#e8e8e8;"></div><div class="t" style="left:3.20px;top:233.00px;font-size:11px;color:#444;transform:scaleX(1.0400);">Reunig Elena</div><div class="t" style="left:301.02px;top:233.00px;font-size:11px;color:#008000;transform:scaleX(0.9600);">0.00</div><div class="t" style="left:398.50px;top:233.00px;font-size:11px;color:#008000;transform:scaleX(1.0220);">0.00 h</div><div class="t" style="left:506.50px;top:233.00px;font-size:11px;color:#008000;transform:scaleX(1.0220);">0.00 h</div><div class="t" style="left:599.20px;top:233.00px;font-size:11px;color:#cc0000;">-136.00 h</div><div class="a" style="left:666px;top:228px;width:86px;height:19px;background:#e8655f;"></div><div class="t" style="left:756.90px;top:234.00px;font-size:11px;color:#444;transform:scaleX(1.0256);">-738.00</div><div class="t" style="left:3.20px;top:258.00px;font-size:11px;color:#444;transform:scaleX(1.0400);">Hofer Christian</div><div class="t" style="left:301.02px;top:258.00px;font-size:11px;color:#008000;transform:scaleX(0.9600);">0.00</div><div class="t" style="left:398.50px;top:258.00px;font-size:11px;color:#008000;transform:scaleX(1.0220);">0.00 h</div><div class="t" style="left:506.50px;top:258.00px;font-size:11px;color:#008000;transform:scaleX(1.0220);">0.00 h</div><div class="t" style="left:599.20px;top:258.00px;font-size:11px;color:#cc0000;">-136.00 h</div><div class="a" style="left:661px;top:253px;width:91px;height:19px;background:#e8655f;"></div><div class="t" style="left:756.90px;top:259.00px;font-size:11px;color:#444;transform:scaleX(1.0256);">-774.67</div>
</div>
<svg class="a" style="left:1060px;top:610px;" width="12" height="9" viewBox="0 0 12 9"><path d="M2 7 L6 2.5 L10 7 Z" fill="#aaa"/></svg>
<div class="a" style="left:1059px;top:623px;width:13px;height:114px;background:#c8c8c8;"></div>
<svg class="a" style="left:1060px;top:854px;" width="12" height="9" viewBox="0 0 12 9"><path d="M2 2 L6 6.5 L10 2 Z" fill="#555"/></svg>
<div class="a" style="left:246px;top:868px;width:828px;height:1px;background:#d0d0d0;"></div>
<svg class="a" style="left:253px;top:877px;" width="17" height="16" viewBox="0 0 17 16"><path d="M8 1 L1.5 8 L8 15 M15 1 L8.5 8 L15 15" fill="none" stroke="#c8c8c8" stroke-width="1.1"/></svg>
<svg class="a" style="left:287px;top:877px;" width="11" height="16" viewBox="0 0 11 16"><path d="M9.5 1 L2 8 L9.5 15" fill="none" stroke="#c8c8c8" stroke-width="1.1"/></svg>
<div class="a" style="left:312.5px;top:878.5px;width:1px;height:13px;background:#e2e2e2;"></div>
<div class="t" style="left:328.70px;top:880.00px;font-size:11px;color:#333;transform:scaleX(0.9763);">Seite</div>
<div class="a" style="left:371.5px;top:874px;width:40px;height:22px;border:1px solid #c9c9c9;background:#fff;box-sizing:border-box;"></div>
<div class="t" style="left:380.50px;top:881.00px;font-size:11px;color:#333;">1</div>
<div class="t" style="left:421.50px;top:880.00px;font-size:11px;color:#333;">von 1</div>
<div class="a" style="left:464.5px;top:878.5px;width:1px;height:13px;background:#e2e2e2;"></div>
<svg class="a" style="left:479.5px;top:877px;" width="11" height="16" viewBox="0 0 11 16"><path d="M1.5 1 L9 8 L1.5 15" fill="none" stroke="#c8c8c8" stroke-width="1.1"/></svg>
<svg class="a" style="left:509px;top:877px;" width="17" height="16" viewBox="0 0 17 16"><path d="M2 1 L8.5 8 L2 15 M9 1 L15.5 8 L9 15" fill="none" stroke="#c8c8c8" stroke-width="1.1"/></svg>
<div class="a" style="left:537.5px;top:878.5px;width:1px;height:13px;background:#e2e2e2;"></div>
<svg class="a" style="left:549.5px;top:876.0px;" width="18" height="18" viewBox="0 0 16 16"><path d="M13.2 5.2 A6.2 6.2 0 1 0 14.2 9.5" fill="none" stroke="#9a9a9a" stroke-width="1.1"/><path d="M13.6 1.2 L13.6 5.6 L9.3 5.6" fill="none" stroke="#9a9a9a" stroke-width="1.1"/></svg>
<div class="t" style="left:713.00px;top:880.00px;font-size:11px;color:#333;transform:scaleX(1.0170);">Ansicht 1 - 21 von 21</div>
<div class="a" style="left:834.5px;top:878.5px;width:1px;height:13px;background:#e2e2e2;"></div>
<div class="t" style="left:850.00px;top:880.00px;font-size:11px;color:#333;transform:scaleX(0.9880);">Zeige</div>
<div class="a" style="left:893.0px;top:874.5px;width:54px;height:21px;border:1px solid #c9c9c9;background:#fff;box-sizing:border-box;"></div>
<div class="t" style="left:900.00px;top:881.00px;font-size:11px;color:#333;">100</div>
<svg class="a" style="left:929.5px;top:880.0px;" width="11" height="7" viewBox="0 0 11 7"><path d="M1 1 L5.5 6 L10 1" fill="none" stroke="#888" stroke-width="1"/></svg>
<div class="t" style="left:962.00px;top:880.00px;font-size:11px;color:#333;transform:scaleX(1.0307);">Elemente pro Seite</div>
<div class="a" style="left:1082px;top:513px;width:830px;height:391px;border:1px solid #dadada;border-radius:4px;box-sizing:border-box;background:#fcfcfc;"></div>
<div class="t" style="left:1092.00px;top:520.00px;font-size:13px;color:#5b82c9;transform:scaleX(1.0659);">Übersicht: Stunden pro Hauptprojekt</div>
<svg class="a" style="left:1883.9px;top:516.4px;" width="19.2" height="19.2" viewBox="0 0 19.2 19.2"><circle cx="9.6" cy="9.6" r="7.6" fill="none" stroke="#8a8a8a" stroke-width="1.1"/><g transform="translate(9.6 9.6) scale(1.0)"><path d="M-2.6 -2.2 a2.6 2.6 0 1 1 3.6 2.4 c-0.8 0.4 -1 0.9 -1 1.9" fill="none" stroke="#8a8a8a" stroke-width="1.2000000000000002"/><circle cx="0" cy="4.3" r="0.8" fill="#8a8a8a"/></g></svg>
<div class="a" style="left:1085.5px;top:542.2px;width:275.0px;height:29.5px;background:#e9e9e9;border-radius:3px;"></div>
<div class="a" style="left:1090.3px;top:545.5px;width:64.20000000000005px;height:23.0px;border:1px solid #cfcfcf;background:#fff;box-sizing:border-box;"></div>
<div class="t" style="left:1096.30px;top:552.00px;font-size:12px;color:#444;transform:scaleX(1.0047);text-rendering:geometricPrecision;">Monat</div>
<svg class="a" style="left:1137.5px;top:552.5px;" width="11" height="7" viewBox="0 0 11 7"><path d="M1 1 L5.5 6 L10 1" fill="none" stroke="#888" stroke-width="1"/></svg>
<div class="a" style="left:1160.6px;top:545.5px;width:172.4000000000001px;height:23.0px;border:1px solid #d6d6d6;background:#f7f7f7;box-sizing:border-box;border-radius:3px;"></div>
<div class="a" style="left:1177.5px;top:545.5px;width:138.70000000000005px;height:23.0px;border:1px solid #cfcfcf;background:#fff;box-sizing:border-box;"></div>
<div class="a" style="left:1246.5px;top:545.5px;width:1px;height:23.0px;background:#cfcfcf;"></div>
<svg class="a" style="left:1164.6px;top:550.0px;" width="9" height="14" viewBox="0 0 9 14"><path d="M7 1 L1.8 7 L7 13" fill="none" stroke="#999" stroke-width="1.1"/></svg>
<svg class="a" style="left:1320.2px;top:550.0px;" width="9" height="14" viewBox="0 0 9 14"><path d="M2 1 L7.2 7 L2 13" fill="none" stroke="#999" stroke-width="1.1"/></svg>
<div class="t" style="left:1183.20px;top:552.00px;font-size:12px;color:#333;transform:scaleX(0.9378);text-rendering:geometricPrecision;">01.02.2020</div>
<div class="t" style="left:1253.00px;top:552.00px;font-size:12px;color:#333;transform:scaleX(0.9395);text-rendering:geometricPrecision;">29.02.2020</div>
<svg class="a" style="left:1336.0px;top:548.5px;" width="18" height="18" viewBox="0 0 16 16"><path d="M13.2 5.2 A6.2 6.2 0 1 0 14.2 9.5" fill="none" stroke="#2a9d8f" stroke-width="1.4"/><path d="M13.6 1.2 L13.6 5.6 L9.3 5.6" fill="none" stroke="#2a9d8f" stroke-width="1.4"/></svg>
<div class="a" style="left:1363.7px;top:547px;width:169.29999999999995px;height:24px;border:1px solid #cfcfcf;background:#fff;box-sizing:border-box;"></div>
<div class="a" style="left:1364.7px;top:548px;width:137.29999999999995px;height:22px;overflow:hidden">
<div class="t" style="left:5.60px;top:5.00px;font-size:13px;color:#333;transform:scaleX(0.9983)">Gruppiert nach 1. Ebene</div></div>
<svg class="a" style="left:1515.3px;top:555.5px;" width="11" height="7" viewBox="0 0 11 7"><path d="M1 1 L5.5 6 L10 1" fill="none" stroke="#999" stroke-width="1"/></svg>
<div class="a" style="left:1083px;top:575px;width:828px;height:1px;background:#d8d8d8;"></div>
<div class="a" style="left:1083px;top:599px;width:828px;height:1px;background:#d0d0d0;"></div>
<div class="a" style="left:1320px;top:576px;width:1px;height:23px;background:#dedede;"></div>
<div class="a" style="left:1438px;top:576px;width:1px;height:23px;background:#dedede;"></div>
<div class="a" style="left:1556px;top:576px;width:1px;height:23px;background:#dedede;"></div>
<div class="a" style="left:1674px;top:576px;width:1px;height:23px;background:#dedede;"></div>
<div class="a" style="left:1792px;top:576px;width:1px;height:23px;background:#dedede;"></div>
<div class="a" style="left:1910px;top:576px;width:1px;height:23px;background:#dedede;"></div>
<div class="t" style="left:1090.50px;top:582.00px;font-size:11px;color:#444;transform:scaleX(1.0657);">Projekt</div>
<div class="t" style="left:1327.20px;top:582.00px;font-size:11px;color:#444;transform:scaleX(1.0349);">Verrechenbare ...</div>
<div class="t" style="left:1445.50px;top:582.00px;font-size:11px;color:#444;transform:scaleX(1.0310);">Nicht Verrechen...</div>
<div class="t" style="left:1564.40px;top:582.00px;font-size:11px;color:#444;transform:scaleX(1.0238);">Gesamtarbeitsz...</div>
<div class="t" style="left:1690.60px;top:582.00px;font-size:11px;color:#444;transform:scaleX(1.0403);">Verrechenbar %</div>
<div class="t" style="left:1843.00px;top:582.00px;font-size:11px;color:#444;transform:scaleX(1.0398);">Zieldauer</div>
<div class="t" style="left:1086.10px;top:608.00px;font-size:11px;color:#444;transform:scaleX(1.0087);">4 Marketing &amp; PR</div>
<div class="t" style="left:1403.56px;top:608.00px;font-size:11px;color:#008000;transform:scaleX(1.0200);">0.00 h</div>
<div class="t" style="left:1522.26px;top:608.00px;font-size:11px;color:#008000;transform:scaleX(1.0200);">0.00 h</div>
<div class="t" style="left:1640.26px;top:608.00px;font-size:11px;color:#008000;transform:scaleX(1.0200);">0.00 h</div>
<div class="t" style="left:1764.40px;top:608.00px;font-size:11px;color:#008000;transform:scaleX(1.0200);">0.0%</div>
<div class="t" style="left:1876.76px;top:608.00px;font-size:11px;color:#008000;transform:scaleX(1.0200);">0.00 h</div>
<div class="a" style="left:1083px;top:624px;width:828px;height:1px;background:#e8e8e8;"></div>
<div class="a" style="left:1083px;top:625px;width:828px;height:24px;background:#ededf9;"></div>
<div class="t" style="left:1403.58px;top:632.00px;font-size:11px;color:#008000;font-weight:bold;font-style:italic;">0.00 h</div>
<div class="t" style="left:1522.28px;top:632.00px;font-size:11px;color:#008000;font-weight:bold;font-style:italic;">0.00 h</div>
<div class="t" style="left:1640.28px;top:632.00px;font-size:11px;color:#008000;font-weight:bold;font-style:italic;">0.00 h</div>
<div class="t" style="left:1764.91px;top:632.00px;font-size:11px;color:#008000;font-weight:bold;font-style:italic;">0.0%</div>
<div class="t" style="left:1876.78px;top:632.00px;font-size:11px;color:#008000;font-weight:bold;font-style:italic;">0.00 h</div>
<div class="a" style="left:1083px;top:868px;width:828px;height:1px;background:#d0d0d0;"></div>
<svg class="a" style="left:1090px;top:877px;" width="17" height="16" viewBox="0 0 17 16"><path d="M8 1 L1.5 8 L8 15 M15 1 L8.5 8 L15 15" fill="none" stroke="#c8c8c8" stroke-width="1.1"/></svg>
<svg class="a" style="left:1124px;top:877px;" width="11" height="16" viewBox="0 0 11 16"><path d="M9.5 1 L2 8 L9.5 15" fill="none" stroke="#c8c8c8" stroke-width="1.1"/></svg>
<div class="a" style="left:1149.5px;top:878.5px;width:1px;height:13px;background:#e2e2e2;"></div>
<div class="t" style="left:1165.70px;top:880.00px;font-size:11px;color:#333;transform:scaleX(0.9763);">Seite</div>
<div class="a" style="left:1208.5px;top:874px;width:40px;height:22px;border:1px solid #c9c9c9;background:#fff;box-sizing:border-box;"></div>
<div class="t" style="left:1217.50px;top:881.00px;font-size:11px;color:#333;">1</div>
<div class="t" style="left:1258.50px;top:880.00px;font-size:11px;color:#333;">von 1</div>
<div class="a" style="left:1301.5px;top:878.5px;width:1px;height:13px;background:#e2e2e2;"></div>
<svg class="a" style="left:1316.5px;top:877px;" width="11" height="16" viewBox="0 0 11 16"><path d="M1.5 1 L9 8 L1.5 15" fill="none" stroke="#c8c8c8" stroke-width="1.1"/></svg>
<svg class="a" style="left:1346px;top:877px;" width="17" height="16" viewBox="0 0 17 16"><path d="M2 1 L8.5 8 L2 15 M9 1 L15.5 8 L9 15" fill="none" stroke="#c8c8c8" stroke-width="1.1"/></svg>
<div class="a" style="left:1374.5px;top:878.5px;width:1px;height:13px;background:#e2e2e2;"></div>
<svg class="a" style="left:1386.5px;top:876.0px;" width="18" height="18" viewBox="0 0 16 16"><path d="M13.2 5.2 A6.2 6.2 0 1 0 14.2 9.5" fill="none" stroke="#9a9a9a" stroke-width="1.1"/><path d="M13.6 1.2 L13.6 5.6 L9.3 5.6" fill="none" stroke="#9a9a9a" stroke-width="1.1"/></svg>
<div class="t" style="left:1561.70px;top:880.00px;font-size:11px;color:#333;transform:scaleX(1.0144);">Ansicht 1 - 1 von 1</div>
<div class="a" style="left:1671.5px;top:878.5px;width:1px;height:13px;background:#e2e2e2;"></div>
<div class="t" style="left:1687.00px;top:880.00px;font-size:11px;color:#333;transform:scaleX(0.9880);">Zeige</div>
<div class="a" style="left:1730.0px;top:874.5px;width:54px;height:21px;border:1px solid #c9c9c9;background:#fff;box-sizing:border-box;"></div>
<div class="t" style="left:1737.00px;top:881.00px;font-size:11px;color:#333;">100</div>
<svg class="a" style="left:1766.5px;top:880.0px;" width="11" height="7" viewBox="0 0 11 7"><path d="M1 1 L5.5 6 L10 1" fill="none" stroke="#888" stroke-width="1"/></svg>
<div class="t" style="left:1799.00px;top:880.00px;font-size:11px;color:#333;transform:scaleX(1.0307);">Elemente pro Seite</div>
<svg class="a" style="left:903.3px;top:133px;" width="15" height="22" viewBox="0 0 15 22"><path d="M1 1 L1 17.4 L4.9 13.8 L7.7 19.8 L10.2 18.8 L7.5 12.8 L12.6 12.8 Z" fill="#fff" stroke="#111" stroke-width="1.05" stroke-linejoin="round"/></svg>
</div></body></html>
